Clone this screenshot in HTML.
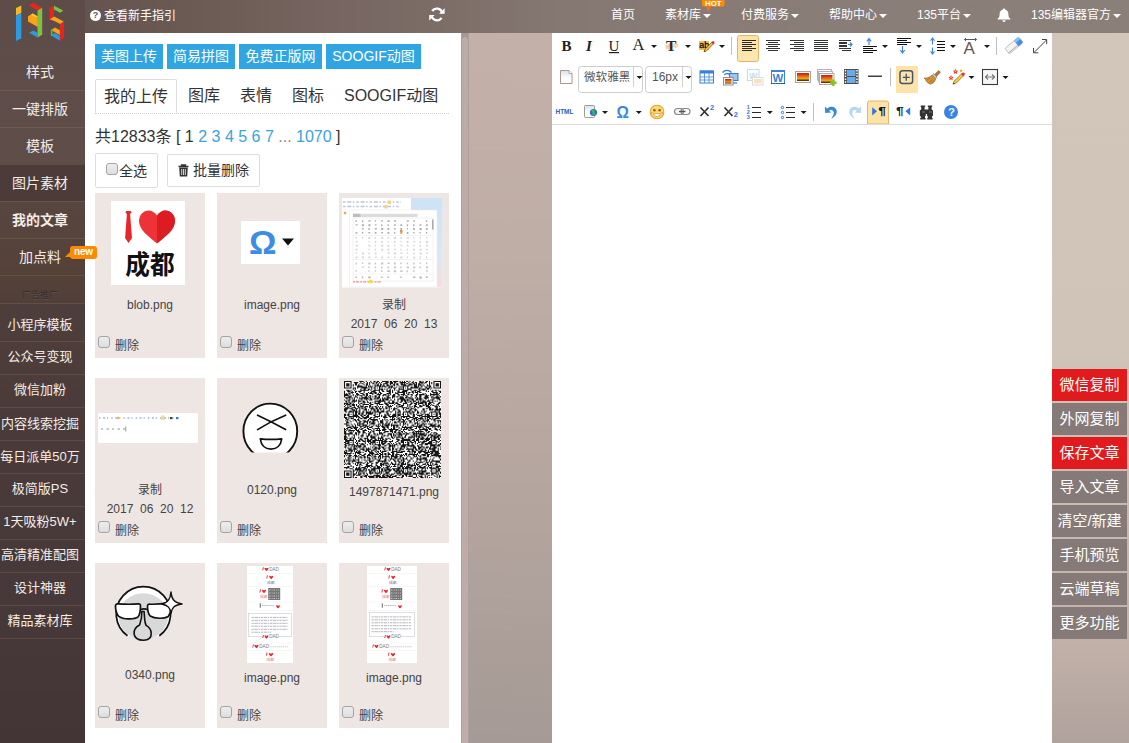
<!DOCTYPE html>
<html lang="zh-CN">
<head>
<meta charset="utf-8">
<title>135编辑器</title>
<style>
*{box-sizing:border-box;margin:0;padding:0}
html,body{width:1129px;height:743px;overflow:hidden}
body{position:relative;font-family:"Liberation Sans","Noto Sans CJK SC",sans-serif;font-size:12px;color:#333;background:#c0aea6}
.abs{position:absolute}
/* background strips */
#gap{left:461px;top:33px;width:91px;height:710px;background:linear-gradient(180deg,#c3b1a9 0%,#bfaea6 30%,#b5a59f 65%,#a59a95 100%)}
#sbar{left:461px;top:33px;width:8px;height:710px;background:linear-gradient(180deg,#bdaba5 0%,#c0aca6 100%);border-left:1px solid #ab9f9f;border-right:1px solid #ab9f9f}
#rstrip{left:1052px;top:33px;width:77px;height:710px;background:linear-gradient(180deg,#d2c6bb 0%,#d0c4b9 45%,#c2b2aa 85%,#b0a29c 100%)}
/* top bar */
#top{left:0;top:0;width:1129px;height:33px;background:linear-gradient(90deg,#655350 85px,#6c5a54 200px,#766560 330px,#7d6e68 450px,#857772 560px,#887b76 700px,#8a7e79 900px,#8b7f7a 1129px)}
#top .nav{position:absolute;top:0;height:30px;line-height:30px;color:#fff;font-size:12px;white-space:nowrap}
.caret{display:inline-block;width:0;height:0;border-left:4px solid transparent;border-right:4px solid transparent;border-top:4px solid #fff;vertical-align:middle;margin-left:2px}
/* sidebar */
#side{z-index:3;left:0;top:0;width:85px;height:743px;background:linear-gradient(180deg,#5e4c49 0px,#5f4d49 160px,#574640 202px,#544239 275px,#503f39 303px,#4e3e3b 304px,#4a3b3a 430px,#473839 600px,#433536 743px)}
#side .it{position:absolute;left:0;width:80px;text-align:center;color:#f3ece6;font-size:14px;white-space:nowrap}
#side .ln{position:absolute;left:0;width:85px;height:1px;background:rgba(165,135,90,.24)}
/* panel */
#panel{left:85px;top:33px;width:376px;height:710px;background:#fff}
.bbtn{position:absolute;height:25px;line-height:25px;background:#2fa6e2;color:#fff;font-size:14px;text-align:center;white-space:nowrap}
.tab{position:absolute;height:34px;line-height:33px;font-size:16px;color:#333;white-space:nowrap}
.card{position:absolute;width:110px;height:165px;background:#eee6e2}
.card .nm{position:absolute;left:0;width:110px;text-align:center;font-size:12px;color:#444;white-space:nowrap;line-height:14px}
.card .cb{position:absolute;left:3px;top:143px;width:12px;height:12px;border:1px solid #a4a4a4;border-radius:3px;background:linear-gradient(#ededed,#dedede)}
.card .dl{position:absolute;left:20px;top:146px;font-size:12px;color:#444;line-height:14px}
/* editor */
#editor{left:552px;top:33px;width:500px;height:710px;background:#fff}
#tbline{left:552px;top:124px;width:500px;height:1px;background:#dcdcdc}
.rb{position:absolute;left:1052px;width:75px;height:32px;line-height:32px;text-align:center;color:#fff;font-size:15px;background:#857a77;white-space:nowrap}
.rb.red{background:#e11b1d}
.ic{position:absolute;overflow:visible}
.dd{position:absolute;width:0;height:0;border-left:3px solid transparent;border-right:3px solid transparent;border-top:3px solid #222}
.sep{position:absolute;width:1px;height:18px;background:#b9c0d0}
.act{position:absolute;background:#fde0a2;border:1px solid #e2b774;border-radius:2px}
.combo{position:absolute;top:66px;height:26px;border:1px solid #cfcfcf;border-radius:3px;background:#fff;font-size:12px;color:#555;line-height:20px}
</style>
</head>
<body>
<div id="gap" class="abs"></div>
<div id="sbar" class="abs"><svg class="abs" style="left:0;top:0" width="6" height="6" viewBox="0 0 6 6"><path d="M0 0h6v6l-3-2.500-3 2.500z" fill="#a29998"/></svg></div>
<div id="rstrip" class="abs"></div>
<div id="top" class="abs">
  <div class="nav" style="left:90px;top:1px"><span style="display:inline-block;width:11px;height:11px;border-radius:6px;background:#fff;color:#64524e;font-size:9px;font-weight:bold;line-height:11px;text-align:center;vertical-align:middle;margin-right:3px;position:relative;top:-1px">?</span>查看新手指引</div>
  <svg class="abs" style="left:429px;top:7px" width="16" height="15" viewBox="0 0 16 15"><path d="M13.300 6.200A5.600 5.600 0 0 0 3.200 4" fill="none" stroke="#fff" stroke-width="2.300"/><path d="M15.600 1.300v5.500h-5.500z" fill="#fff"/><path d="M2.500 8.600a5.600 5.600 0 0 0 10.100 2.300" fill="none" stroke="#fff" stroke-width="2.300"/><path d="M.2 13.600v-5.500h5.500z" fill="#fff"/></svg>
  <svg class="abs" style="left:997px;top:8px" width="14" height="14" viewBox="0 0 14 14"><path d="M7 .6c.7 0 1.100.4 1.100 1 2.200.6 3.300 2.300 3.300 4.600 0 2.600.7 3.700 2 4.600v.7h-12.800v-.7c1.300-.9 2-2 2-4.600 0-2.300 1.100-4 3.300-4.600 0-.6.400-1 1.100-1z" fill="#fff"/><path d="M5.300 12.300h3.400a1.700 1.700 0 0 1-3.400 0z" fill="#fff"/></svg>
  <svg class="abs" style="left:702px;top:0" width="23" height="13" viewBox="0 0 23 13"><path d="M0 0h22.500v4.500a2 2 0 0 1-2 2h-18.500a2 2 0 0 1-2-2z" fill="#ff8a00"/><path d="M4.300 6.500h5.200l-4 5.500z" fill="#f4701c"/><text x="3" y="5.500" font-family="Liberation Sans, sans-serif" font-weight="bold" font-size="6.400" fill="#fff" textLength="16.500" lengthAdjust="spacingAndGlyphs">HOT</text></svg>
  <div class="nav" style="left:611px">首页</div>
  <div class="nav" style="left:665px">素材库<span class="caret"></span></div>
  <div class="nav" style="left:741px">付费服务<span class="caret"></span></div>
  <div class="nav" style="left:829px">帮助中心<span class="caret"></span></div>
  <div class="nav" style="left:917px">135平台<span class="caret"></span></div>
  <div class="nav" style="left:1031px">135编辑器官方<span class="caret"></span></div>
</div>
<div id="side" class="abs">
  <svg class="abs" style="left:0;top:0;z-index:6" width="85" height="46" viewBox="0 0 85 46">
    <path d="M16 8l5.300-2.500v7.500l-5.300 2.500z" fill="#f5b820"/><path d="M16 15.500l5.300-2.500v25.500l-5.300 2.500z" fill="#2c9be2"/>
    <path d="M28.500 5.300l4.700-2.500 9 5-4.700 2.700z" fill="#e3261f"/><path d="M37.500 10.500l4.700-2.700v27l-4.700 2.700z" fill="#7cc142"/>
    <path d="M28 16.200l4.800-2.600 5 2.800v10.500l-9.800-5.500z" fill="#f8a31a"/><path d="M32.800 13.600l5 2.800-2 1.200-5-2.800z" fill="#fbc82a"/>
    <path d="M29 32.800l4.300-2.300 4.500 2.500v4.500l-8.800-4.700z" fill="#2c9be2"/>
    <path d="M49.500 7.800l4.500-2v13l-4.500 2.400z" fill="#e3261f"/><path d="M54 5.800l9.300 4.800-3 2.200-6.300-3.400z" fill="#7cc142"/>
    <path d="M49.800 19.200l4.400-2.700 9.600 5-3.600 2.500-6-3z" fill="#f8a31a"/><path d="M59.800 24.500l4.200-3v16l-4.200 3.300z" fill="#e3261f"/>
    <path d="M51 30l4-2.600 4.800 2.900v4.700z" fill="#f8a31a"/><path d="M51 35.400l3.600-2.300 5.200 2.700v5z" fill="#2c9be2"/><path d="M50.800 30l1.800-1v6l-1.800 1z" fill="#5cb83a"/>
  </svg>
  <div class="abs" style="left:0;top:164px;width:85px;height:37px;background:#4b3c3a"></div>
  <div class="it" style="top:62px;line-height:20px">样式</div>
  <div class="it" style="top:99px;line-height:20px">一键排版</div>
  <div class="it" style="top:136px;line-height:20px">模板</div>
  <div class="it" style="top:173px;line-height:20px">图片素材</div>
  <div class="it" style="top:210px;line-height:20px;font-weight:bold">我的文章</div>
  <div class="it" style="top:247px;line-height:20px">加点料</div>
  <div class="ln" style="top:90px"></div>
  <div class="ln" style="top:127px"></div>
  <div class="ln" style="top:164px"></div>
  <div class="ln" style="top:201px"></div>
  <div class="ln" style="top:238px"></div>
  <div class="ln" style="top:275px"></div>
  <div class="it" style="top:286px;line-height:18px;font-size:9px;color:#382c2a;text-shadow:0 1px 0 rgba(255,255,255,.10)">广告推广</div>
  <div class="it" style="top:315px;line-height:20px;font-size:13px">小程序模板</div>
  <div class="it" style="top:347px;line-height:20px;font-size:13px">公众号变现</div>
  <div class="it" style="top:380px;line-height:20px;font-size:13px">微信加粉</div>
  <div class="it" style="top:414px;line-height:20px;font-size:13px">内容线索挖掘</div>
  <div class="it" style="top:447px;line-height:20px;font-size:13px">每日派单50万</div>
  <div class="it" style="top:479px;line-height:20px;font-size:13px">极简版PS</div>
  <div class="it" style="top:512px;line-height:20px;font-size:13px">1天吸粉5W+</div>
  <div class="it" style="top:545px;line-height:20px;font-size:13px">高清精准配图</div>
  <div class="it" style="top:578px;line-height:20px;font-size:13px">设计神器</div>
  <div class="it" style="top:611px;line-height:20px;font-size:13px">精品素材库</div>
  <div class="ln" style="top:303px"></div>
  <div class="ln" style="top:341px"></div>
  <div class="ln" style="top:374px"></div>
  <div class="ln" style="top:407px"></div>
  <div class="ln" style="top:440px"></div>
  <div class="ln" style="top:473px"></div>
  <div class="ln" style="top:506px"></div>
  <div class="ln" style="top:539px"></div>
  <div class="ln" style="top:572px"></div>
  <div class="ln" style="top:605px"></div>
  <div class="ln" style="top:638px"></div>
  <div class="abs" style="left:70px;top:246px;width:27px;height:13px;border-radius:3px;background:#ff8a00;color:#fff;font-size:10px;font-weight:bold;line-height:12.500px;text-align:center;letter-spacing:-.2px;z-index:5">new</div>
  <div class="abs" style="left:65px;top:251px;width:0;height:0;border-left:6px solid transparent;border-bottom:6px solid #ff8a00;z-index:5"></div>
</div>
<div id="panel" class="abs">
  <div class="bbtn" style="left:10px;top:11px;width:68px">美图上传</div>
  <div class="bbtn" style="left:82px;top:11px;width:68px">简易拼图</div>
  <div class="bbtn" style="left:154px;top:11px;width:83px">免费正版网</div>
  <div class="bbtn" style="left:241px;top:11px;width:95px">SOOGIF动图</div>
  <div class="abs" style="left:10px;top:80px;width:354px;height:0;border-top:1px dotted #cfcfcf"></div>
  <div class="tab" style="left:10px;top:46px;width:82px;text-align:center;border:1px solid #ddd;border-bottom:1px solid #fff;border-radius:2px 2px 0 0;background:#fff">我的上传</div>
  <div class="tab" style="left:103px;top:46px">图库</div>
  <div class="tab" style="left:155px;top:46px">表情</div>
  <div class="tab" style="left:207px;top:46px">图标</div>
  <div class="tab" style="left:259px;top:46px">SOOGIF动图</div>
  <div class="abs" style="left:10px;top:93px;height:22px;line-height:22px;font-size:16px;color:#333;white-space:nowrap;word-spacing:0">共12833条 [ 1 <span style="color:#3aa3dc">2 3 4 5 6 7</span> <span style="color:#888">...</span> <span style="color:#3aa3dc">1070</span> ]</div>
  <div class="abs" style="left:10px;top:120px;width:63px;height:35px;border:1px solid #ddd;border-radius:2px;font-size:14px;line-height:32px;color:#333;white-space:nowrap"><span style="position:absolute;left:10px;top:9px;width:12px;height:12px;border:1px solid #a4a4a4;border-radius:3px;background:linear-gradient(#ededed,#dedede)"></span><span style="position:absolute;left:23px;top:1px">全选</span></div>
  <div class="abs" style="left:82px;top:121px;width:93px;height:33px;border:1px solid #ddd;border-radius:2px;font-size:14px;line-height:32px;color:#333;white-space:nowrap"><svg style="position:absolute;left:10px;top:9px" width="11" height="13" viewBox="0 0 11 13"><path d="M0.5 2.500h10M3.500 2.500v-1.500h4v1.500" fill="none" stroke="#333" stroke-width="1.400"/><path d="M1.200 3.500h8.600l-.6 9h-7.400z" fill="#333"/><path d="M3.700 5v6M5.500 5v6M7.300 5v6" stroke="#fff" stroke-width=".8"/></svg><span style="position:absolute;left:25px;top:-1px">批量删除</span></div>
  <div class="card" id="c00" style="left:10px;top:160px"><svg class="abs" style="left:0;top:0" width="110" height="100" viewBox="95 193 110 100"><rect x="111" y="201" width="74" height="84" fill="#fff"/><path d="M126.300 211h4.400l.8 1.500-1.400 1.500 1.900 24-3.500 5-3.400-5 1.800-24-1.400-1.500z" fill="#e8262a"/><path d="M157 243.500c-9-7.500-18-14-18-22.500 0-6 4.500-10.500 9.500-10.500 3.500 0 6.500 2 8.500 5 2-3 5-5 8.500-5 5 0 9.500 4.500 9.500 10.500 0 8.500-9 15-18 22.500z" fill="#ee3338"/><path d="M157 243.500v-28c2-3 5-5 8.500-5 5 0 9.500 4.500 9.500 10.500 0 8.500-9 15-18 22.500z" fill="#dc1c22"/><text x="125.300" y="274" font-family="Liberation Sans, Noto Sans CJK SC, sans-serif" font-weight="bold" font-size="24.700" fill="#111" transform="translate(0 274) scale(1 1.040) translate(0 -274)">成都</text></svg><div class="nm" style="top:105px">blob.png</div><span class="cb"></span><span class="dl">删除</span></div>
  <div class="card" id="c01" style="left:132px;top:160px"><svg class="abs" style="left:0;top:0" width="110" height="100" viewBox="217 193 110 100"><rect x="241" y="221" width="59" height="43" fill="#fff"/><text x="249" y="253.500" font-family="Liberation Sans, sans-serif" font-weight="bold" font-size="34" fill="#3d8de4" textLength="27.500" lengthAdjust="spacingAndGlyphs">Ω</text><path d="M282 238.600h12l-6 7z" fill="#111"/></svg><div class="nm" style="top:105px">image.png</div><span class="cb"></span><span class="dl">删除</span></div>
  <div class="card" id="c02" style="left:254px;top:160px"><svg class="abs" style="left:0;top:0" width="110" height="100" viewBox="339 193 110 100"><defs><linearGradient id="gbp" x1="0" y1="0" x2="0" y2="1"><stop offset="0" stop-color="#cfe3f6"/><stop offset=".55" stop-color="#d9e6f4"/><stop offset="1" stop-color="#f6dce0"/></linearGradient></defs><rect x="342" y="198" width="100.400" height="89.500" fill="#fff"/><rect x="411" y="198" width="31.400" height="12" fill="#cfe3f6"/><rect x="437" y="209" width="5.400" height="78.500" fill="url(#gbp)"/><rect x="349.500" y="210" width="87.500" height="77" fill="#fff" stroke="#ececec" stroke-width=".6"/><path d="M343 202h58M343 206.500h56" stroke="#b9c6d8" stroke-width="1.400" stroke-dasharray="2.500 1.800 4 1.500 1.500 2"/><rect x="388" y="200.500" width="3" height="3.500" fill="#f3d489"/><rect x="384.500" y="205" width="3" height="3.500" fill="#f3d489"/><rect x="343.800" y="211.800" width="2.400" height="2.400" fill="#e8a848"/><rect x="353" y="213.800" width="64.500" height="3.200" fill="#dcdcdc"/><rect x="353" y="213.800" width="7.500" height="3.200" fill="#bdbdbd"/><rect x="353" y="218" width="80" height="63" fill="none" stroke="#e6e6e6" stroke-width=".6"/><rect x="432" y="219.500" width="1.600" height="10" fill="#a9a9b6"/><path d="M355.5 220.3h1.4v1.8h-1.4zM361.9 220.3h1.4v2.0h-1.4zM368.3 220.3h2.2v1.4h-2.2zM374.7 220.3h1.4v1.4h-1.4zM381.1 220.3h1.8v1.4h-1.8zM387.5 220.3h2.2v1.8h-2.2zM393.9 220.3h2.2v1.4h-2.2zM406.7 220.3h2.2v1.4h-2.2zM413.1 220.3h1.8v1.4h-1.8zM425.9 220.3h1.4v1.8h-1.4zM355.5 224.2h2.2v1.4h-2.2zM361.9 224.2h2.2v2.0h-2.2zM368.3 224.2h2.2v2.0h-2.2zM374.7 224.2h1.8v1.4h-1.8zM381.1 224.2h1.4v2.0h-1.4zM387.5 224.2h1.4v1.8h-1.4zM393.9 224.2h1.8v1.8h-1.8zM400.3 224.2h1.8v1.8h-1.8zM406.7 224.2h1.4v2.0h-1.4zM413.1 224.2h1.4v2.0h-1.4zM419.5 224.2h1.8v1.8h-1.8zM425.9 224.2h1.8v2.0h-1.8zM361.9 228.1h1.8v1.4h-1.8zM368.3 228.1h1.4v1.8h-1.4zM374.7 228.1h2.2v1.4h-2.2zM381.1 228.1h2.2v1.8h-2.2zM387.5 228.1h1.8v2.0h-1.8zM393.9 228.1h1.8v1.4h-1.8zM400.3 228.1h1.8v1.8h-1.8zM406.7 228.1h1.4v1.4h-1.4zM413.1 228.1h1.8v2.0h-1.8zM419.5 228.1h2.2v1.8h-2.2zM425.9 228.1h1.8v2.0h-1.8zM355.5 232.0h1.8v1.8h-1.8zM361.9 232.0h1.4v1.8h-1.4zM368.3 232.0h1.8v1.4h-1.8zM374.7 232.0h1.8v1.8h-1.8zM381.1 232.0h1.8v1.4h-1.8zM387.5 232.0h1.8v2.0h-1.8zM393.9 232.0h1.4v1.8h-1.4zM400.3 232.0h1.8v2.0h-1.8zM406.7 232.0h1.8v2.0h-1.8zM413.1 232.0h1.4v1.4h-1.4zM419.5 232.0h1.4v1.4h-1.4zM425.9 232.0h1.4v1.8h-1.4z" fill="#6f7380" opacity="0.55"/><path d="M355.5 237.0h1.4v1.8h-1.4zM361.9 237.0h1.4v1.8h-1.4zM368.3 237.0h2.2v2.0h-2.2zM374.7 237.0h1.4v2.0h-1.4zM381.1 237.0h2.2v2.0h-2.2zM387.5 237.0h1.4v1.8h-1.4zM393.9 237.0h2.2v2.0h-2.2zM400.3 237.0h1.8v1.8h-1.8zM406.7 237.0h2.2v1.8h-2.2zM413.1 237.0h1.4v1.4h-1.4zM419.5 237.0h1.4v1.8h-1.4zM425.9 237.0h1.4v1.4h-1.4zM355.5 240.9h2.2v1.4h-2.2zM368.3 240.9h1.4v1.4h-1.4zM374.7 240.9h1.4v2.0h-1.4zM381.1 240.9h1.8v2.0h-1.8zM387.5 240.9h1.4v1.4h-1.4zM393.9 240.9h1.8v1.8h-1.8zM400.3 240.9h1.4v1.4h-1.4zM406.7 240.9h1.8v2.0h-1.8zM413.1 240.9h2.2v1.4h-2.2zM419.5 240.9h1.4v2.0h-1.4zM425.9 240.9h2.2v2.0h-2.2zM355.5 244.8h2.2v1.8h-2.2zM368.3 244.8h2.2v1.8h-2.2zM374.7 244.8h1.4v1.8h-1.4zM381.1 244.8h2.2v2.0h-2.2zM387.5 244.8h1.8v2.0h-1.8zM393.9 244.8h1.4v1.4h-1.4zM400.3 244.8h2.2v1.4h-2.2zM406.7 244.8h1.8v1.8h-1.8zM413.1 244.8h1.4v1.8h-1.4zM419.5 244.8h1.4v2.0h-1.4zM425.9 244.8h1.8v1.8h-1.8zM355.5 248.7h2.2v1.8h-2.2zM368.3 248.7h1.4v1.4h-1.4zM374.7 248.7h1.4v1.8h-1.4zM381.1 248.7h2.2v2.0h-2.2zM387.5 248.7h1.8v2.0h-1.8zM393.9 248.7h2.2v1.4h-2.2zM400.3 248.7h1.4v1.8h-1.4zM406.7 248.7h1.4v1.8h-1.4zM413.1 248.7h1.8v2.0h-1.8zM419.5 248.7h2.2v1.8h-2.2zM425.9 248.7h2.2v1.4h-2.2zM355.5 252.6h1.4v1.4h-1.4zM361.9 252.6h2.2v1.8h-2.2zM368.3 252.6h1.4v2.0h-1.4zM374.7 252.6h1.8v2.0h-1.8zM387.5 252.6h2.2v1.4h-2.2zM393.9 252.6h2.2v2.0h-2.2zM400.3 252.6h2.2v1.4h-2.2zM406.7 252.6h1.4v1.4h-1.4zM413.1 252.6h1.4v1.8h-1.4zM419.5 252.6h2.2v1.8h-2.2zM425.9 252.6h1.8v1.4h-1.8zM355.5 256.5h2.2v1.8h-2.2zM361.9 256.5h2.2v2.0h-2.2zM368.3 256.5h2.2v1.8h-2.2zM374.7 256.5h2.2v1.4h-2.2zM381.1 256.5h2.2v2.0h-2.2zM387.5 256.5h1.8v1.4h-1.8zM393.9 256.5h1.4v1.4h-1.4zM400.3 256.5h2.2v2.0h-2.2zM406.7 256.5h1.4v1.8h-1.4zM413.1 256.5h2.2v2.0h-2.2zM419.5 256.5h1.4v2.0h-1.4zM425.9 256.5h1.4v1.8h-1.4z" fill="#8a8e98" opacity="0.35"/><path d="M355.5 262.5h1.4v2.0h-1.4zM361.9 262.5h1.4v1.4h-1.4zM368.3 262.5h2.2v2.0h-2.2zM374.7 262.5h1.4v2.0h-1.4zM381.1 262.5h2.2v2.0h-2.2zM387.5 262.5h2.2v1.4h-2.2zM393.9 262.5h1.8v2.0h-1.8zM400.3 262.5h1.4v1.8h-1.4zM406.7 262.5h1.4v1.8h-1.4zM413.1 262.5h1.4v2.0h-1.4zM419.5 262.5h1.4v1.4h-1.4zM425.9 262.5h1.4v1.4h-1.4zM361.9 266.4h1.8v1.4h-1.8zM368.3 266.4h1.4v1.8h-1.4zM374.7 266.4h1.4v1.8h-1.4zM381.1 266.4h1.4v2.0h-1.4zM387.5 266.4h1.4v2.0h-1.4zM393.9 266.4h2.2v1.8h-2.2zM400.3 266.4h1.4v1.8h-1.4zM406.7 266.4h2.2v1.8h-2.2zM413.1 266.4h2.2v1.8h-2.2zM419.5 266.4h1.4v1.8h-1.4zM425.9 266.4h2.2v1.8h-2.2zM355.5 270.3h1.4v1.4h-1.4zM368.3 270.3h1.4v1.4h-1.4zM374.7 270.3h1.4v1.4h-1.4zM381.1 270.3h1.4v1.8h-1.4zM387.5 270.3h2.2v1.8h-2.2zM393.9 270.3h2.2v2.0h-2.2zM400.3 270.3h2.2v1.8h-2.2zM406.7 270.3h1.4v2.0h-1.4zM413.1 270.3h1.4v1.8h-1.4zM425.9 270.3h1.8v1.4h-1.8z" fill="#7a7e88" opacity="0.45"/><path d="M355.5 276.5h1.4v1.4h-1.4zM361.9 276.5h1.4v1.8h-1.4zM368.3 276.5h2.2v1.8h-2.2zM381.1 276.5h1.4v1.4h-1.4zM387.5 276.5h1.4v1.4h-1.4zM400.3 276.5h1.4v1.4h-1.4zM413.1 276.5h2.2v1.4h-2.2zM419.5 276.5h2.2v2.0h-2.2zM425.9 276.5h1.8v1.4h-1.8z" fill="#666" opacity="0.5"/><path d="M353 235.500h80M353 259.500h80M353 274h80" stroke="#ececec" stroke-width=".6"/><path d="M353 281.800h29" stroke="#ee8a90" stroke-width="1.300" stroke-dasharray="2 1 3 1.200"/><circle cx="370.500" cy="281.500" r="2" fill="#f6e21a"/><rect x="400" y="230" width="2.600" height="2.400" fill="#e89a30"/></svg><div class="nm" style="top:105px">录制</div><div class="nm" style="top:124px">2017&nbsp; 06&nbsp; 20&nbsp; 13</div><span class="cb"></span><span class="dl">删除</span></div>
  <div class="card" id="c10" style="left:10px;top:345px"><svg class="abs" style="left:0;top:0" width="110" height="100" viewBox="95 378 110 100"><rect x="98" y="413" width="100" height="30" fill="#fff"/><path d="M99 418h80" stroke="#9fb6d6" stroke-width="1.600" stroke-dasharray="1.500 2.500 2 2 1.200 3"/><rect x="161" y="415.500" width="3.400" height="4.500" fill="#f6d98a"/><circle cx="118" cy="418" r="1.300" fill="#f0b838"/><rect x="170" y="417" width="2.400" height="2.200" fill="#444"/><rect x="176" y="417" width="2.400" height="2.200" fill="#3a78d8"/><path d="M101 429h24" stroke="#8e939c" stroke-width="1.200" stroke-dasharray="2 3.500 2.500 3"/><path d="M125.800 426.500v5" stroke="#666" stroke-width=".7"/></svg><div class="nm" style="top:105px">录制</div><div class="nm" style="top:124px">2017&nbsp; 06&nbsp; 20&nbsp; 12</div><span class="cb"></span><span class="dl">删除</span></div>
  <div class="card" id="c11" style="left:132px;top:345px"><svg class="abs" style="left:0;top:0" width="110" height="100" viewBox="217 378 110 100"><defs><clipPath id="cf"><rect x="217" y="378" width="110" height="74.600"/></clipPath></defs><g clip-path="url(#cf)"><ellipse cx="270.300" cy="431.300" rx="26.900" ry="27.700" fill="#fff" stroke="#111" stroke-width="1.900"/></g><path d="M257.600 415.200q13 6 28 14.400M285.600 415.200q-15 6-28 14.400" stroke="#111" stroke-width="1.700" fill="none" stroke-linecap="round"/><path d="M260.300 438.800q10.700 1.200 21.400 0c-.8 6.500-5 10.300-10.700 10.300s-9.900-3.800-10.700-10.300z" fill="#fff" stroke="#111" stroke-width="1.700" stroke-linejoin="round"/></svg><div class="nm" style="top:105px">0120.png</div><span class="cb"></span><span class="dl">删除</span></div>
  <div class="card" id="c12" style="left:254px;top:345px"><svg class="abs" style="left:0;top:0" width="110" height="104" viewBox="339 378 110 104"><rect x="344" y="381" width="97" height="97" fill="#fff"/><path d="M344.0 381.0h7.6M359.3 381.0h4.4M365.8 381.0h1.1M370.2 381.0h1.1M373.4 381.0h2.2M376.7 381.0h2.2M382.1 381.0h6.5M389.8 381.0h2.2M393.0 381.0h5.4M399.6 381.0h1.1M401.8 381.0h1.1M403.9 381.0h1.1M406.1 381.0h2.2M409.4 381.0h1.1M412.7 381.0h1.1M419.2 381.0h2.2M422.5 381.0h1.1M425.7 381.0h2.2M429.0 381.0h1.1M433.4 381.0h7.6M344.0 382.1h1.1M350.5 382.1h1.1M353.8 382.1h4.4M360.3 382.1h1.1M363.6 382.1h1.1M366.9 382.1h1.1M369.1 382.1h1.1M371.2 382.1h1.1M373.4 382.1h1.1M375.6 382.1h2.2M378.9 382.1h1.1M381.1 382.1h1.1M385.4 382.1h3.3M389.8 382.1h3.3M394.1 382.1h2.2M399.6 382.1h6.5M408.3 382.1h1.1M411.6 382.1h2.2M414.8 382.1h2.2M419.2 382.1h4.4M424.7 382.1h2.2M429.0 382.1h1.1M431.2 382.1h1.1M433.4 382.1h1.1M439.9 382.1h1.1M344.0 383.2h1.1M346.2 383.2h3.3M350.5 383.2h1.1M354.9 383.2h2.2M359.3 383.2h1.1M361.4 383.2h2.2M365.8 383.2h2.2M369.1 383.2h1.1M372.3 383.2h2.2M375.6 383.2h1.1M377.8 383.2h1.1M380.0 383.2h1.1M383.2 383.2h4.4M389.8 383.2h3.3M394.1 383.2h1.1M396.3 383.2h2.2M400.7 383.2h2.2M403.9 383.2h1.1M406.1 383.2h2.2M409.4 383.2h2.2M412.7 383.2h2.2M415.9 383.2h1.1M418.1 383.2h2.2M421.4 383.2h1.1M423.6 383.2h1.1M429.0 383.2h1.1M431.2 383.2h1.1M433.4 383.2h1.1M435.6 383.2h3.3M439.9 383.2h1.1M344.0 384.3h1.1M346.2 384.3h3.3M350.5 384.3h1.1M352.7 384.3h1.1M354.9 384.3h2.2M358.2 384.3h1.1M363.6 384.3h1.1M365.8 384.3h2.2M369.1 384.3h1.1M374.5 384.3h1.1M376.7 384.3h2.2M380.0 384.3h2.2M383.2 384.3h1.1M386.5 384.3h2.2M389.8 384.3h1.1M393.0 384.3h2.2M396.3 384.3h2.2M400.7 384.3h5.4M408.3 384.3h4.4M413.8 384.3h3.3M418.1 384.3h3.3M422.5 384.3h1.1M426.8 384.3h1.1M429.0 384.3h1.1M433.4 384.3h1.1M435.6 384.3h3.3M439.9 384.3h1.1M344.0 385.4h1.1M346.2 385.4h3.3M350.5 385.4h1.1M352.7 385.4h1.1M357.1 385.4h5.4M365.8 385.4h1.1M368.0 385.4h1.1M370.2 385.4h1.1M372.3 385.4h1.1M374.5 385.4h6.5M382.1 385.4h3.3M386.5 385.4h3.3M390.9 385.4h2.2M394.1 385.4h1.1M398.5 385.4h1.1M402.9 385.4h6.5M413.8 385.4h3.3M418.1 385.4h1.1M420.3 385.4h2.2M423.6 385.4h1.1M426.8 385.4h4.4M433.4 385.4h1.1M435.6 385.4h3.3M439.9 385.4h1.1M344.0 386.4h1.1M350.5 386.4h1.1M357.1 386.4h9.8M368.0 386.4h4.4M374.5 386.4h1.1M378.9 386.4h4.4M384.3 386.4h2.2M388.7 386.4h4.4M396.3 386.4h1.1M399.6 386.4h4.4M407.2 386.4h1.1M410.5 386.4h2.2M413.8 386.4h5.4M421.4 386.4h1.1M424.7 386.4h2.2M429.0 386.4h2.2M433.4 386.4h1.1M439.9 386.4h1.1M344.0 387.5h7.6M352.7 387.5h3.3M357.1 387.5h1.1M361.4 387.5h6.5M371.2 387.5h1.1M373.4 387.5h2.2M376.7 387.5h1.1M378.9 387.5h1.1M387.6 387.5h2.2M390.9 387.5h1.1M393.0 387.5h3.3M398.5 387.5h1.1M402.9 387.5h1.1M405.0 387.5h1.1M407.2 387.5h1.1M410.5 387.5h7.6M419.2 387.5h2.2M425.7 387.5h4.4M431.2 387.5h1.1M433.4 387.5h7.6M352.7 388.6h1.1M354.9 388.6h1.1M360.3 388.6h1.1M363.6 388.6h2.2M368.0 388.6h2.2M371.2 388.6h1.1M374.5 388.6h1.1M378.9 388.6h4.4M384.3 388.6h1.1M386.5 388.6h1.1M389.8 388.6h1.1M394.1 388.6h1.1M398.5 388.6h5.4M407.2 388.6h4.4M418.1 388.6h2.2M421.4 388.6h4.4M426.8 388.6h2.2M430.1 388.6h1.1M346.2 389.7h3.3M350.5 389.7h1.1M353.8 389.7h1.1M360.3 389.7h8.7M370.2 389.7h1.1M373.4 389.7h6.5M381.1 389.7h2.2M386.5 389.7h1.1M388.7 389.7h2.2M392.0 389.7h1.1M394.1 389.7h1.1M396.3 389.7h1.1M398.5 389.7h1.1M402.9 389.7h5.4M410.5 389.7h1.1M413.8 389.7h3.3M419.2 389.7h2.2M422.5 389.7h2.2M425.7 389.7h1.1M432.3 389.7h1.1M434.5 389.7h2.2M437.7 389.7h1.1M344.0 390.8h1.1M347.3 390.8h3.3M351.6 390.8h1.1M354.9 390.8h2.2M358.2 390.8h3.3M363.6 390.8h1.1M371.2 390.8h4.4M378.9 390.8h1.1M382.1 390.8h2.2M386.5 390.8h4.4M392.0 390.8h1.1M397.4 390.8h2.2M401.8 390.8h5.4M411.6 390.8h2.2M414.8 390.8h1.1M417.0 390.8h3.3M425.7 390.8h1.1M427.9 390.8h1.1M431.2 390.8h2.2M435.6 390.8h1.1M438.8 390.8h2.2M344.0 391.9h1.1M348.4 391.9h1.1M350.5 391.9h3.3M354.9 391.9h1.1M359.3 391.9h1.1M363.6 391.9h1.1M368.0 391.9h1.1M370.2 391.9h2.2M373.4 391.9h3.3M378.9 391.9h2.2M388.7 391.9h2.2M392.0 391.9h1.1M395.2 391.9h1.1M397.4 391.9h7.6M406.1 391.9h1.1M408.3 391.9h2.2M411.6 391.9h2.2M414.8 391.9h3.3M419.2 391.9h2.2M432.3 391.9h5.4M439.9 391.9h1.1M344.0 393.0h1.1M346.2 393.0h1.1M348.4 393.0h2.2M351.6 393.0h1.1M356.0 393.0h2.2M360.3 393.0h3.3M365.8 393.0h2.2M369.1 393.0h4.4M374.5 393.0h2.2M377.8 393.0h1.1M380.0 393.0h2.2M386.5 393.0h4.4M395.2 393.0h3.3M402.9 393.0h2.2M406.1 393.0h1.1M408.3 393.0h1.1M412.7 393.0h1.1M417.0 393.0h1.1M422.5 393.0h1.1M424.7 393.0h1.1M430.1 393.0h1.1M433.4 393.0h1.1M435.6 393.0h2.2M438.8 393.0h1.1M344.0 394.1h4.4M349.4 394.1h1.1M352.7 394.1h1.1M356.0 394.1h3.3M362.5 394.1h2.2M365.8 394.1h2.2M372.3 394.1h1.1M376.7 394.1h4.4M383.2 394.1h3.3M387.6 394.1h1.1M389.8 394.1h1.1M393.0 394.1h2.2M397.4 394.1h2.2M400.7 394.1h4.4M407.2 394.1h2.2M410.5 394.1h2.2M415.9 394.1h2.2M419.2 394.1h5.4M425.7 394.1h1.1M430.1 394.1h8.7M344.0 395.2h5.4M350.5 395.2h1.1M352.7 395.2h1.1M354.9 395.2h1.1M357.1 395.2h1.1M359.3 395.2h3.3M363.6 395.2h1.1M365.8 395.2h2.2M369.1 395.2h2.2M374.5 395.2h2.2M378.9 395.2h1.1M382.1 395.2h2.2M385.4 395.2h1.1M387.6 395.2h2.2M392.0 395.2h3.3M398.5 395.2h1.1M402.9 395.2h1.1M405.0 395.2h2.2M411.6 395.2h1.1M414.8 395.2h2.2M419.2 395.2h2.2M424.7 395.2h4.4M430.1 395.2h1.1M433.4 395.2h1.1M436.6 395.2h1.1M438.8 395.2h1.1M344.0 396.3h1.1M348.4 396.3h3.3M354.9 396.3h2.2M361.4 396.3h1.1M364.7 396.3h2.2M368.0 396.3h1.1M370.2 396.3h1.1M372.3 396.3h1.1M374.5 396.3h2.2M377.8 396.3h2.2M386.5 396.3h2.2M392.0 396.3h3.3M396.3 396.3h2.2M399.6 396.3h3.3M406.1 396.3h2.2M410.5 396.3h1.1M415.9 396.3h1.1M419.2 396.3h2.2M424.7 396.3h3.3M431.2 396.3h2.2M435.6 396.3h3.3M439.9 396.3h1.1M345.1 397.3h5.4M351.6 397.3h1.1M353.8 397.3h1.1M357.1 397.3h1.1M359.3 397.3h1.1M361.4 397.3h6.5M369.1 397.3h2.2M374.5 397.3h1.1M376.7 397.3h3.3M382.1 397.3h1.1M384.3 397.3h1.1M386.5 397.3h4.4M392.0 397.3h1.1M399.6 397.3h4.4M405.0 397.3h2.2M408.3 397.3h2.2M411.6 397.3h1.1M414.8 397.3h1.1M417.0 397.3h1.1M419.2 397.3h2.2M423.6 397.3h5.4M431.2 397.3h1.1M433.4 397.3h6.5M346.2 398.4h1.1M349.4 398.4h1.1M351.6 398.4h1.1M353.8 398.4h1.1M359.3 398.4h3.3M363.6 398.4h5.4M370.2 398.4h2.2M373.4 398.4h5.4M380.0 398.4h1.1M382.1 398.4h6.5M394.1 398.4h1.1M397.4 398.4h7.6M407.2 398.4h1.1M409.4 398.4h4.4M415.9 398.4h6.5M424.7 398.4h2.2M432.3 398.4h2.2M436.6 398.4h3.3M344.0 399.5h1.1M347.3 399.5h3.3M352.7 399.5h2.2M356.0 399.5h1.1M358.2 399.5h1.1M361.4 399.5h1.1M365.8 399.5h1.1M369.1 399.5h3.3M378.9 399.5h2.2M382.1 399.5h2.2M385.4 399.5h3.3M389.8 399.5h2.2M394.1 399.5h1.1M397.4 399.5h1.1M400.7 399.5h8.7M411.6 399.5h2.2M415.9 399.5h2.2M419.2 399.5h2.2M422.5 399.5h1.1M427.9 399.5h1.1M430.1 399.5h3.3M438.8 399.5h2.2M345.1 400.6h2.2M348.4 400.6h1.1M351.6 400.6h5.4M358.2 400.6h3.3M362.5 400.6h2.2M366.9 400.6h1.1M374.5 400.6h10.9M388.7 400.6h1.1M392.0 400.6h2.2M397.4 400.6h1.1M400.7 400.6h2.2M403.9 400.6h2.2M407.2 400.6h1.1M409.4 400.6h2.2M412.7 400.6h3.3M418.1 400.6h1.1M420.3 400.6h1.1M422.5 400.6h3.3M426.8 400.6h3.3M432.3 400.6h1.1M434.5 400.6h1.1M436.6 400.6h1.1M346.2 401.7h1.1M348.4 401.7h2.2M351.6 401.7h1.1M353.8 401.7h1.1M358.2 401.7h1.1M362.5 401.7h3.3M366.9 401.7h2.2M370.2 401.7h1.1M372.3 401.7h1.1M374.5 401.7h1.1M377.8 401.7h3.3M384.3 401.7h1.1M387.6 401.7h2.2M392.0 401.7h3.3M396.3 401.7h1.1M399.6 401.7h2.2M405.0 401.7h2.2M408.3 401.7h1.1M410.5 401.7h1.1M412.7 401.7h1.1M415.9 401.7h3.3M420.3 401.7h6.5M429.0 401.7h4.4M438.8 401.7h2.2M344.0 402.8h4.4M349.4 402.8h2.2M352.7 402.8h1.1M358.2 402.8h1.1M360.3 402.8h2.2M363.6 402.8h1.1M369.1 402.8h2.2M374.5 402.8h5.4M384.3 402.8h3.3M388.7 402.8h5.4M395.2 402.8h3.3M402.9 402.8h4.4M410.5 402.8h2.2M413.8 402.8h3.3M418.1 402.8h5.4M424.7 402.8h2.2M427.9 402.8h3.3M433.4 402.8h1.1M437.7 402.8h2.2M344.0 403.9h1.1M346.2 403.9h4.4M351.6 403.9h3.3M356.0 403.9h1.1M359.3 403.9h1.1M362.5 403.9h6.5M370.2 403.9h3.3M376.7 403.9h1.1M378.9 403.9h4.4M385.4 403.9h3.3M394.1 403.9h1.1M397.4 403.9h3.3M402.9 403.9h1.1M407.2 403.9h1.1M409.4 403.9h2.2M414.8 403.9h2.2M418.1 403.9h1.1M422.5 403.9h1.1M424.7 403.9h2.2M427.9 403.9h2.2M431.2 403.9h1.1M436.6 403.9h2.2M345.1 405.0h1.1M347.3 405.0h1.1M349.4 405.0h1.1M351.6 405.0h3.3M356.0 405.0h1.1M358.2 405.0h1.1M360.3 405.0h1.1M362.5 405.0h1.1M369.1 405.0h2.2M376.7 405.0h1.1M386.5 405.0h2.2M389.8 405.0h1.1M392.0 405.0h1.1M396.3 405.0h1.1M398.5 405.0h1.1M400.7 405.0h3.3M407.2 405.0h1.1M409.4 405.0h1.1M413.8 405.0h2.2M419.2 405.0h2.2M422.5 405.0h2.2M425.7 405.0h3.3M430.1 405.0h1.1M432.3 405.0h2.2M435.6 405.0h1.1M437.7 405.0h1.1M344.0 406.1h1.1M347.3 406.1h1.1M349.4 406.1h2.2M353.8 406.1h1.1M357.1 406.1h2.2M360.3 406.1h3.3M364.7 406.1h3.3M369.1 406.1h2.2M372.3 406.1h1.1M374.5 406.1h2.2M377.8 406.1h1.1M380.0 406.1h1.1M382.1 406.1h1.1M385.4 406.1h1.1M387.6 406.1h4.4M396.3 406.1h1.1M398.5 406.1h4.4M407.2 406.1h1.1M409.4 406.1h1.1M411.6 406.1h1.1M413.8 406.1h3.3M419.2 406.1h3.3M425.7 406.1h4.4M434.5 406.1h3.3M438.8 406.1h1.1M345.1 407.2h4.4M351.6 407.2h4.4M358.2 407.2h2.2M361.4 407.2h1.1M363.6 407.2h2.2M369.1 407.2h1.1M371.2 407.2h2.2M375.6 407.2h2.2M378.9 407.2h1.1M382.1 407.2h1.1M385.4 407.2h2.2M388.7 407.2h1.1M394.1 407.2h1.1M397.4 407.2h1.1M401.8 407.2h5.4M408.3 407.2h1.1M410.5 407.2h1.1M413.8 407.2h1.1M417.0 407.2h2.2M427.9 407.2h3.3M435.6 407.2h2.2M344.0 408.2h4.4M349.4 408.2h3.3M354.9 408.2h3.3M359.3 408.2h1.1M361.4 408.2h2.2M364.7 408.2h2.2M370.2 408.2h4.4M375.6 408.2h2.2M378.9 408.2h3.3M383.2 408.2h1.1M385.4 408.2h2.2M388.7 408.2h1.1M390.9 408.2h1.1M393.0 408.2h4.4M402.9 408.2h1.1M406.1 408.2h3.3M410.5 408.2h3.3M414.8 408.2h1.1M422.5 408.2h2.2M425.7 408.2h2.2M429.0 408.2h2.2M432.3 408.2h1.1M435.6 408.2h2.2M438.8 408.2h2.2M344.0 409.3h3.3M351.6 409.3h3.3M356.0 409.3h1.1M359.3 409.3h1.1M363.6 409.3h3.3M368.0 409.3h1.1M371.2 409.3h1.1M373.4 409.3h2.2M376.7 409.3h2.2M380.0 409.3h1.1M383.2 409.3h1.1M388.7 409.3h1.1M393.0 409.3h2.2M397.4 409.3h2.2M402.9 409.3h1.1M405.0 409.3h1.1M409.4 409.3h2.2M413.8 409.3h3.3M422.5 409.3h2.2M429.0 409.3h4.4M434.5 409.3h6.5M344.0 410.4h2.2M349.4 410.4h2.2M352.7 410.4h4.4M358.2 410.4h2.2M362.5 410.4h1.1M365.8 410.4h1.1M370.2 410.4h1.1M373.4 410.4h2.2M376.7 410.4h2.2M381.1 410.4h3.3M386.5 410.4h3.3M392.0 410.4h1.1M395.2 410.4h1.1M398.5 410.4h2.2M406.1 410.4h1.1M408.3 410.4h2.2M411.6 410.4h1.1M414.8 410.4h1.1M417.0 410.4h1.1M421.4 410.4h1.1M423.6 410.4h1.1M425.7 410.4h1.1M434.5 410.4h1.1M436.6 410.4h1.1M438.8 410.4h1.1M345.1 411.5h2.2M348.4 411.5h5.4M354.9 411.5h3.3M359.3 411.5h1.1M362.5 411.5h2.2M365.8 411.5h5.4M372.3 411.5h1.1M374.5 411.5h9.8M385.4 411.5h2.2M389.8 411.5h2.2M395.2 411.5h1.1M397.4 411.5h3.3M402.9 411.5h7.6M411.6 411.5h3.3M417.0 411.5h2.2M421.4 411.5h1.1M423.6 411.5h2.2M430.1 411.5h6.5M437.7 411.5h2.2M348.4 412.6h1.1M352.7 412.6h1.1M354.9 412.6h2.2M358.2 412.6h2.2M361.4 412.6h2.2M365.8 412.6h7.6M374.5 412.6h1.1M378.9 412.6h2.2M386.5 412.6h2.2M395.2 412.6h1.1M397.4 412.6h1.1M399.6 412.6h1.1M402.9 412.6h1.1M407.2 412.6h1.1M409.4 412.6h2.2M412.7 412.6h1.1M417.0 412.6h2.2M420.3 412.6h1.1M423.6 412.6h1.1M429.0 412.6h1.1M431.2 412.6h1.1M435.6 412.6h2.2M438.8 412.6h2.2M344.0 413.7h2.2M347.3 413.7h2.2M350.5 413.7h1.1M352.7 413.7h1.1M354.9 413.7h2.2M358.2 413.7h2.2M361.4 413.7h2.2M365.8 413.7h1.1M368.0 413.7h4.4M374.5 413.7h1.1M376.7 413.7h1.1M378.9 413.7h1.1M384.3 413.7h1.1M386.5 413.7h2.2M389.8 413.7h1.1M393.0 413.7h3.3M397.4 413.7h3.3M401.8 413.7h2.2M405.0 413.7h1.1M407.2 413.7h1.1M410.5 413.7h1.1M412.7 413.7h2.2M415.9 413.7h1.1M421.4 413.7h2.2M424.7 413.7h4.4M431.2 413.7h1.1M433.4 413.7h1.1M435.6 413.7h2.2M438.8 413.7h2.2M344.0 414.8h2.2M347.3 414.8h2.2M352.7 414.8h5.4M360.3 414.8h2.2M363.6 414.8h2.2M366.9 414.8h2.2M373.4 414.8h2.2M378.9 414.8h1.1M381.1 414.8h1.1M384.3 414.8h2.2M387.6 414.8h2.2M392.0 414.8h4.4M397.4 414.8h3.3M402.9 414.8h1.1M407.2 414.8h2.2M412.7 414.8h2.2M417.0 414.8h5.4M424.7 414.8h1.1M426.8 414.8h3.3M431.2 414.8h1.1M435.6 414.8h2.2M439.9 414.8h1.1M344.0 415.9h1.1M348.4 415.9h10.9M361.4 415.9h2.2M365.8 415.9h3.3M374.5 415.9h5.4M381.1 415.9h1.1M383.2 415.9h3.3M388.7 415.9h7.6M397.4 415.9h1.1M400.7 415.9h9.8M412.7 415.9h2.2M419.2 415.9h1.1M421.4 415.9h16.3M438.8 415.9h2.2M344.0 417.0h3.3M348.4 417.0h1.1M350.5 417.0h1.1M352.7 417.0h1.1M356.0 417.0h1.1M358.2 417.0h2.2M362.5 417.0h6.5M370.2 417.0h2.2M373.4 417.0h2.2M376.7 417.0h1.1M383.2 417.0h4.4M389.8 417.0h1.1M392.0 417.0h2.2M396.3 417.0h1.1M398.5 417.0h1.1M400.7 417.0h1.1M402.9 417.0h2.2M406.1 417.0h1.1M409.4 417.0h4.4M414.8 417.0h3.3M420.3 417.0h2.2M424.7 417.0h1.1M426.8 417.0h3.3M432.3 417.0h1.1M436.6 417.0h2.2M439.9 417.0h1.1M345.1 418.1h2.2M348.4 418.1h1.1M350.5 418.1h3.3M358.2 418.1h1.1M360.3 418.1h2.2M363.6 418.1h3.3M369.1 418.1h2.2M373.4 418.1h1.1M378.9 418.1h1.1M384.3 418.1h1.1M392.0 418.1h1.1M394.1 418.1h1.1M397.4 418.1h2.2M400.7 418.1h1.1M406.1 418.1h3.3M412.7 418.1h4.4M418.1 418.1h5.4M424.7 418.1h1.1M426.8 418.1h1.1M429.0 418.1h2.2M432.3 418.1h1.1M434.5 418.1h5.4M346.2 419.1h2.2M353.8 419.1h2.2M357.1 419.1h2.2M368.0 419.1h1.1M370.2 419.1h7.6M382.1 419.1h1.1M384.3 419.1h1.1M386.5 419.1h1.1M389.8 419.1h5.4M396.3 419.1h1.1M398.5 419.1h2.2M401.8 419.1h2.2M405.0 419.1h1.1M407.2 419.1h1.1M411.6 419.1h1.1M413.8 419.1h1.1M415.9 419.1h2.2M420.3 419.1h1.1M422.5 419.1h1.1M424.7 419.1h1.1M426.8 419.1h2.2M431.2 419.1h1.1M433.4 419.1h2.2M345.1 420.2h1.1M347.3 420.2h1.1M349.4 420.2h1.1M352.7 420.2h1.1M354.9 420.2h2.2M358.2 420.2h2.2M362.5 420.2h3.3M366.9 420.2h2.2M372.3 420.2h3.3M376.7 420.2h1.1M380.0 420.2h3.3M385.4 420.2h1.1M387.6 420.2h1.1M392.0 420.2h1.1M398.5 420.2h2.2M402.9 420.2h2.2M408.3 420.2h3.3M413.8 420.2h1.1M415.9 420.2h1.1M418.1 420.2h2.2M422.5 420.2h2.2M425.7 420.2h3.3M433.4 420.2h2.2M436.6 420.2h4.4M346.2 421.3h2.2M350.5 421.3h1.1M356.0 421.3h1.1M359.3 421.3h2.2M363.6 421.3h4.4M369.1 421.3h2.2M372.3 421.3h2.2M377.8 421.3h1.1M380.0 421.3h3.3M386.5 421.3h1.1M389.8 421.3h1.1M394.1 421.3h2.2M397.4 421.3h2.2M400.7 421.3h4.4M406.1 421.3h1.1M409.4 421.3h2.2M413.8 421.3h1.1M417.0 421.3h1.1M421.4 421.3h1.1M423.6 421.3h2.2M426.8 421.3h1.1M429.0 421.3h1.1M434.5 421.3h1.1M437.7 421.3h1.1M439.9 421.3h1.1M346.2 422.4h3.3M357.1 422.4h3.3M362.5 422.4h2.2M366.9 422.4h1.1M369.1 422.4h1.1M371.2 422.4h4.4M380.0 422.4h3.3M385.4 422.4h2.2M388.7 422.4h1.1M392.0 422.4h1.1M394.1 422.4h3.3M399.6 422.4h1.1M402.9 422.4h1.1M405.0 422.4h1.1M409.4 422.4h1.1M411.6 422.4h1.1M414.8 422.4h3.3M419.2 422.4h1.1M422.5 422.4h1.1M432.3 422.4h1.1M437.7 422.4h1.1M344.0 423.5h3.3M350.5 423.5h1.1M353.8 423.5h1.1M357.1 423.5h1.1M359.3 423.5h4.4M366.9 423.5h1.1M370.2 423.5h4.4M377.8 423.5h2.2M382.1 423.5h2.2M385.4 423.5h1.1M387.6 423.5h2.2M390.9 423.5h1.1M399.6 423.5h1.1M402.9 423.5h3.3M407.2 423.5h1.1M413.8 423.5h2.2M417.0 423.5h2.2M421.4 423.5h5.4M427.9 423.5h4.4M434.5 423.5h2.2M439.9 423.5h1.1M346.2 424.6h3.3M351.6 424.6h1.1M354.9 424.6h1.1M357.1 424.6h3.3M362.5 424.6h4.4M369.1 424.6h1.1M373.4 424.6h1.1M375.6 424.6h1.1M377.8 424.6h1.1M380.0 424.6h1.1M382.1 424.6h1.1M384.3 424.6h5.4M390.9 424.6h7.6M399.6 424.6h1.1M402.9 424.6h1.1M407.2 424.6h1.1M411.6 424.6h2.2M417.0 424.6h1.1M419.2 424.6h3.3M423.6 424.6h1.1M430.1 424.6h5.4M437.7 424.6h2.2M346.2 425.7h1.1M349.4 425.7h1.1M351.6 425.7h2.2M354.9 425.7h1.1M359.3 425.7h4.4M364.7 425.7h4.4M371.2 425.7h2.2M375.6 425.7h4.4M381.1 425.7h3.3M385.4 425.7h3.3M390.9 425.7h1.1M393.0 425.7h2.2M396.3 425.7h2.2M401.8 425.7h1.1M405.0 425.7h1.1M410.5 425.7h1.1M412.7 425.7h9.8M423.6 425.7h3.3M429.0 425.7h12.0M347.3 426.8h4.4M352.7 426.8h5.4M360.3 426.8h1.1M363.6 426.8h2.2M366.9 426.8h1.1M369.1 426.8h3.3M377.8 426.8h1.1M382.1 426.8h3.3M386.5 426.8h2.2M393.0 426.8h2.2M396.3 426.8h1.1M398.5 426.8h1.1M401.8 426.8h10.9M415.9 426.8h1.1M418.1 426.8h3.3M422.5 426.8h1.1M425.7 426.8h3.3M432.3 426.8h1.1M434.5 426.8h1.1M437.7 426.8h1.1M439.9 426.8h1.1M344.0 427.9h1.1M346.2 427.9h2.2M350.5 427.9h2.2M353.8 427.9h3.3M359.3 427.9h1.1M361.4 427.9h2.2M366.9 427.9h2.2M372.3 427.9h1.1M374.5 427.9h5.4M383.2 427.9h2.2M387.6 427.9h1.1M390.9 427.9h1.1M393.0 427.9h2.2M398.5 427.9h1.1M400.7 427.9h1.1M403.9 427.9h1.1M406.1 427.9h2.2M409.4 427.9h2.2M414.8 427.9h2.2M419.2 427.9h1.1M422.5 427.9h2.2M425.7 427.9h1.1M427.9 427.9h3.3M434.5 427.9h2.2M439.9 427.9h1.1M344.0 429.0h2.2M347.3 429.0h1.1M349.4 429.0h1.1M354.9 429.0h2.2M358.2 429.0h1.1M360.3 429.0h2.2M364.7 429.0h1.1M368.0 429.0h3.3M373.4 429.0h1.1M376.7 429.0h1.1M378.9 429.0h1.1M382.1 429.0h4.4M388.7 429.0h9.8M400.7 429.0h1.1M402.9 429.0h4.4M408.3 429.0h1.1M410.5 429.0h3.3M419.2 429.0h8.7M429.0 429.0h2.2M434.5 429.0h3.3M438.8 429.0h1.1M344.0 430.0h1.1M346.2 430.0h1.1M348.4 430.0h6.5M356.0 430.0h3.3M362.5 430.0h4.4M371.2 430.0h1.1M373.4 430.0h1.1M375.6 430.0h5.4M382.1 430.0h3.3M389.8 430.0h3.3M395.2 430.0h2.2M398.5 430.0h2.2M402.9 430.0h1.1M408.3 430.0h2.2M411.6 430.0h1.1M413.8 430.0h1.1M418.1 430.0h1.1M420.3 430.0h1.1M424.7 430.0h3.3M431.2 430.0h1.1M436.6 430.0h1.1M439.9 430.0h1.1M344.0 431.1h2.2M348.4 431.1h1.1M350.5 431.1h1.1M352.7 431.1h1.1M357.1 431.1h3.3M362.5 431.1h2.2M368.0 431.1h1.1M370.2 431.1h1.1M372.3 431.1h2.2M378.9 431.1h1.1M384.3 431.1h4.4M389.8 431.1h3.3M394.1 431.1h2.2M398.5 431.1h1.1M400.7 431.1h2.2M403.9 431.1h1.1M412.7 431.1h1.1M414.8 431.1h8.7M425.7 431.1h1.1M427.9 431.1h2.2M344.0 432.2h2.2M349.4 432.2h3.3M354.9 432.2h2.2M358.2 432.2h2.2M362.5 432.2h3.3M369.1 432.2h2.2M373.4 432.2h1.1M378.9 432.2h3.3M383.2 432.2h2.2M392.0 432.2h1.1M394.1 432.2h2.2M397.4 432.2h3.3M401.8 432.2h1.1M405.0 432.2h2.2M409.4 432.2h1.1M411.6 432.2h3.3M415.9 432.2h1.1M418.1 432.2h1.1M420.3 432.2h1.1M423.6 432.2h1.1M426.8 432.2h2.2M431.2 432.2h1.1M433.4 432.2h3.3M344.0 433.3h8.7M354.9 433.3h2.2M358.2 433.3h1.1M362.5 433.3h1.1M365.8 433.3h1.1M368.0 433.3h2.2M373.4 433.3h2.2M376.7 433.3h1.1M378.9 433.3h4.4M387.6 433.3h4.4M393.0 433.3h1.1M396.3 433.3h1.1M398.5 433.3h3.3M402.9 433.3h2.2M406.1 433.3h3.3M412.7 433.3h12.0M425.7 433.3h1.1M430.1 433.3h1.1M433.4 433.3h1.1M435.6 433.3h2.2M345.1 434.4h1.1M348.4 434.4h1.1M352.7 434.4h2.2M356.0 434.4h1.1M358.2 434.4h1.1M361.4 434.4h2.2M368.0 434.4h2.2M371.2 434.4h1.1M374.5 434.4h1.1M376.7 434.4h2.2M382.1 434.4h1.1M384.3 434.4h1.1M387.6 434.4h1.1M389.8 434.4h2.2M393.0 434.4h3.3M397.4 434.4h5.4M405.0 434.4h2.2M410.5 434.4h1.1M412.7 434.4h2.2M415.9 434.4h1.1M419.2 434.4h7.6M427.9 434.4h5.4M434.5 434.4h2.2M437.7 434.4h3.3M344.0 435.5h2.2M348.4 435.5h1.1M353.8 435.5h1.1M360.3 435.5h3.3M365.8 435.5h3.3M370.2 435.5h2.2M373.4 435.5h1.1M375.6 435.5h1.1M381.1 435.5h1.1M383.2 435.5h2.2M386.5 435.5h2.2M390.9 435.5h1.1M393.0 435.5h1.1M395.2 435.5h1.1M398.5 435.5h1.1M400.7 435.5h1.1M405.0 435.5h1.1M411.6 435.5h1.1M413.8 435.5h6.5M421.4 435.5h1.1M423.6 435.5h2.2M427.9 435.5h1.1M431.2 435.5h4.4M436.6 435.5h3.3M344.0 436.6h3.3M351.6 436.6h1.1M353.8 436.6h1.1M358.2 436.6h1.1M361.4 436.6h1.1M366.9 436.6h1.1M370.2 436.6h5.4M377.8 436.6h1.1M381.1 436.6h2.2M390.9 436.6h2.2M394.1 436.6h1.1M396.3 436.6h4.4M401.8 436.6h1.1M403.9 436.6h2.2M408.3 436.6h6.5M415.9 436.6h1.1M418.1 436.6h2.2M421.4 436.6h2.2M426.8 436.6h1.1M430.1 436.6h2.2M433.4 436.6h5.4M439.9 436.6h1.1M344.0 437.7h2.2M347.3 437.7h1.1M349.4 437.7h2.2M352.7 437.7h2.2M358.2 437.7h1.1M360.3 437.7h1.1M363.6 437.7h4.4M371.2 437.7h4.4M377.8 437.7h5.4M385.4 437.7h1.1M387.6 437.7h2.2M392.0 437.7h2.2M396.3 437.7h1.1M400.7 437.7h3.3M408.3 437.7h1.1M410.5 437.7h1.1M413.8 437.7h1.1M417.0 437.7h2.2M420.3 437.7h4.4M425.7 437.7h4.4M431.2 437.7h1.1M433.4 437.7h3.3M437.7 437.7h2.2M344.0 438.8h3.3M349.4 438.8h2.2M352.7 438.8h1.1M354.9 438.8h1.1M359.3 438.8h3.3M364.7 438.8h1.1M366.9 438.8h2.2M370.2 438.8h2.2M374.5 438.8h2.2M377.8 438.8h1.1M380.0 438.8h1.1M382.1 438.8h2.2M385.4 438.8h2.2M389.8 438.8h1.1M396.3 438.8h3.3M401.8 438.8h8.7M412.7 438.8h2.2M415.9 438.8h3.3M420.3 438.8h3.3M424.7 438.8h5.4M431.2 438.8h1.1M433.4 438.8h2.2M437.7 438.8h2.2M345.1 439.9h8.7M356.0 439.9h1.1M358.2 439.9h2.2M361.4 439.9h2.2M364.7 439.9h1.1M366.9 439.9h4.4M372.3 439.9h10.9M384.3 439.9h2.2M392.0 439.9h1.1M397.4 439.9h2.2M400.7 439.9h9.8M411.6 439.9h3.3M415.9 439.9h3.3M423.6 439.9h1.1M425.7 439.9h3.3M431.2 439.9h5.4M439.9 439.9h1.1M345.1 440.9h4.4M352.7 440.9h1.1M356.0 440.9h1.1M358.2 440.9h2.2M362.5 440.9h3.3M366.9 440.9h4.4M372.3 440.9h3.3M378.9 440.9h1.1M381.1 440.9h6.5M388.7 440.9h4.4M396.3 440.9h2.2M400.7 440.9h3.3M407.2 440.9h1.1M409.4 440.9h2.2M413.8 440.9h2.2M418.1 440.9h1.1M420.3 440.9h1.1M422.5 440.9h4.4M429.0 440.9h3.3M435.6 440.9h2.2M438.8 440.9h1.1M344.0 442.0h2.2M347.3 442.0h2.2M350.5 442.0h1.1M352.7 442.0h1.1M354.9 442.0h1.1M357.1 442.0h1.1M364.7 442.0h1.1M368.0 442.0h1.1M370.2 442.0h5.4M376.7 442.0h1.1M378.9 442.0h1.1M381.1 442.0h2.2M384.3 442.0h2.2M389.8 442.0h1.1M395.2 442.0h1.1M398.5 442.0h1.1M400.7 442.0h3.3M405.0 442.0h1.1M407.2 442.0h2.2M410.5 442.0h3.3M414.8 442.0h1.1M418.1 442.0h2.2M421.4 442.0h3.3M427.9 442.0h4.4M433.4 442.0h1.1M435.6 442.0h1.1M437.7 442.0h1.1M345.1 443.1h4.4M352.7 443.1h1.1M356.0 443.1h2.2M359.3 443.1h1.1M361.4 443.1h2.2M364.7 443.1h1.1M369.1 443.1h2.2M372.3 443.1h1.1M374.5 443.1h1.1M378.9 443.1h1.1M381.1 443.1h4.4M387.6 443.1h2.2M390.9 443.1h1.1M393.0 443.1h1.1M396.3 443.1h1.1M398.5 443.1h2.2M402.9 443.1h1.1M407.2 443.1h2.2M411.6 443.1h1.1M414.8 443.1h1.1M417.0 443.1h1.1M421.4 443.1h2.2M424.7 443.1h7.6M435.6 443.1h1.1M439.9 443.1h1.1M344.0 444.2h2.2M348.4 444.2h6.5M357.1 444.2h1.1M360.3 444.2h4.4M366.9 444.2h1.1M370.2 444.2h1.1M372.3 444.2h1.1M374.5 444.2h6.5M382.1 444.2h2.2M386.5 444.2h1.1M388.7 444.2h2.2M392.0 444.2h1.1M394.1 444.2h3.3M399.6 444.2h1.1M401.8 444.2h7.6M411.6 444.2h2.2M419.2 444.2h3.3M424.7 444.2h3.3M430.1 444.2h6.5M437.7 444.2h3.3M345.1 445.3h2.2M348.4 445.3h1.1M351.6 445.3h1.1M353.8 445.3h7.6M363.6 445.3h2.2M373.4 445.3h1.1M377.8 445.3h3.3M384.3 445.3h2.2M388.7 445.3h6.5M397.4 445.3h1.1M400.7 445.3h5.4M407.2 445.3h7.6M417.0 445.3h2.2M421.4 445.3h1.1M430.1 445.3h5.4M436.6 445.3h3.3M344.0 446.4h2.2M350.5 446.4h1.1M352.7 446.4h2.2M356.0 446.4h1.1M358.2 446.4h3.3M362.5 446.4h3.3M370.2 446.4h1.1M372.3 446.4h1.1M374.5 446.4h2.2M378.9 446.4h1.1M381.1 446.4h3.3M388.7 446.4h2.2M392.0 446.4h1.1M394.1 446.4h1.1M400.7 446.4h4.4M406.1 446.4h1.1M410.5 446.4h1.1M412.7 446.4h3.3M418.1 446.4h6.5M425.7 446.4h3.3M430.1 446.4h1.1M433.4 446.4h3.3M439.9 446.4h1.1M345.1 447.5h1.1M347.3 447.5h2.2M350.5 447.5h1.1M353.8 447.5h2.2M357.1 447.5h1.1M359.3 447.5h1.1M362.5 447.5h1.1M365.8 447.5h1.1M368.0 447.5h1.1M372.3 447.5h1.1M374.5 447.5h6.5M382.1 447.5h2.2M385.4 447.5h1.1M387.6 447.5h2.2M392.0 447.5h2.2M397.4 447.5h1.1M399.6 447.5h2.2M403.9 447.5h1.1M407.2 447.5h1.1M412.7 447.5h3.3M418.1 447.5h3.3M423.6 447.5h1.1M425.7 447.5h2.2M429.0 447.5h2.2M432.3 447.5h4.4M437.7 447.5h1.1M348.4 448.6h3.3M352.7 448.6h4.4M360.3 448.6h4.4M365.8 448.6h5.4M373.4 448.6h3.3M377.8 448.6h2.2M383.2 448.6h2.2M388.7 448.6h2.2M392.0 448.6h2.2M395.2 448.6h2.2M399.6 448.6h4.4M406.1 448.6h7.6M414.8 448.6h2.2M418.1 448.6h2.2M421.4 448.6h2.2M424.7 448.6h1.1M429.0 448.6h6.5M437.7 448.6h1.1M439.9 448.6h1.1M345.1 449.7h2.2M348.4 449.7h4.4M353.8 449.7h1.1M357.1 449.7h1.1M359.3 449.7h1.1M362.5 449.7h2.2M365.8 449.7h3.3M371.2 449.7h3.3M375.6 449.7h1.1M380.0 449.7h1.1M384.3 449.7h1.1M386.5 449.7h1.1M388.7 449.7h2.2M392.0 449.7h1.1M396.3 449.7h1.1M398.5 449.7h2.2M408.3 449.7h1.1M411.6 449.7h2.2M415.9 449.7h2.2M420.3 449.7h2.2M424.7 449.7h2.2M427.9 449.7h1.1M432.3 449.7h3.3M437.7 449.7h1.1M344.0 450.8h1.1M346.2 450.8h1.1M348.4 450.8h1.1M350.5 450.8h2.2M353.8 450.8h1.1M356.0 450.8h1.1M358.2 450.8h2.2M364.7 450.8h2.2M368.0 450.8h2.2M371.2 450.8h1.1M374.5 450.8h1.1M376.7 450.8h2.2M380.0 450.8h1.1M382.1 450.8h4.4M392.0 450.8h5.4M398.5 450.8h1.1M400.7 450.8h4.4M407.2 450.8h3.3M411.6 450.8h4.4M418.1 450.8h7.6M427.9 450.8h1.1M430.1 450.8h8.7M344.0 451.8h3.3M350.5 451.8h1.1M354.9 451.8h6.5M362.5 451.8h1.1M369.1 451.8h4.4M375.6 451.8h1.1M377.8 451.8h1.1M381.1 451.8h2.2M387.6 451.8h1.1M390.9 451.8h3.3M396.3 451.8h6.5M409.4 451.8h1.1M411.6 451.8h1.1M413.8 451.8h2.2M418.1 451.8h3.3M423.6 451.8h6.5M431.2 451.8h2.2M434.5 451.8h4.4M344.0 452.9h7.6M352.7 452.9h1.1M354.9 452.9h1.1M357.1 452.9h3.3M364.7 452.9h1.1M369.1 452.9h5.4M376.7 452.9h1.1M378.9 452.9h2.2M382.1 452.9h1.1M384.3 452.9h2.2M387.6 452.9h2.2M392.0 452.9h2.2M396.3 452.9h1.1M405.0 452.9h2.2M409.4 452.9h1.1M411.6 452.9h1.1M413.8 452.9h1.1M417.0 452.9h1.1M419.2 452.9h1.1M424.7 452.9h3.3M430.1 452.9h3.3M434.5 452.9h5.4M345.1 454.0h1.1M347.3 454.0h1.1M349.4 454.0h1.1M354.9 454.0h1.1M359.3 454.0h2.2M363.6 454.0h2.2M368.0 454.0h2.2M371.2 454.0h2.2M374.5 454.0h4.4M380.0 454.0h3.3M384.3 454.0h2.2M387.6 454.0h3.3M392.0 454.0h2.2M395.2 454.0h4.4M400.7 454.0h1.1M402.9 454.0h1.1M405.0 454.0h2.2M408.3 454.0h9.8M421.4 454.0h4.4M426.8 454.0h3.3M431.2 454.0h1.1M433.4 454.0h5.4M344.0 455.1h1.1M346.2 455.1h1.1M348.4 455.1h3.3M353.8 455.1h3.3M358.2 455.1h1.1M361.4 455.1h3.3M366.9 455.1h4.4M372.3 455.1h1.1M374.5 455.1h1.1M378.9 455.1h2.2M382.1 455.1h1.1M385.4 455.1h1.1M387.6 455.1h1.1M390.9 455.1h3.3M395.2 455.1h2.2M399.6 455.1h3.3M403.9 455.1h1.1M406.1 455.1h1.1M408.3 455.1h1.1M412.7 455.1h2.2M415.9 455.1h1.1M418.1 455.1h1.1M420.3 455.1h1.1M422.5 455.1h3.3M426.8 455.1h2.2M431.2 455.1h9.8M344.0 456.2h1.1M348.4 456.2h2.2M352.7 456.2h1.1M354.9 456.2h3.3M359.3 456.2h2.2M363.6 456.2h2.2M366.9 456.2h1.1M371.2 456.2h1.1M373.4 456.2h3.3M377.8 456.2h3.3M382.1 456.2h7.6M390.9 456.2h7.6M399.6 456.2h2.2M407.2 456.2h1.1M409.4 456.2h1.1M413.8 456.2h3.3M419.2 456.2h2.2M426.8 456.2h2.2M430.1 456.2h1.1M435.6 456.2h1.1M437.7 456.2h3.3M347.3 457.3h2.2M350.5 457.3h1.1M354.9 457.3h1.1M358.2 457.3h1.1M360.3 457.3h2.2M363.6 457.3h2.2M366.9 457.3h3.3M372.3 457.3h1.1M374.5 457.3h1.1M377.8 457.3h1.1M380.0 457.3h1.1M382.1 457.3h1.1M385.4 457.3h1.1M388.7 457.3h1.1M390.9 457.3h1.1M394.1 457.3h3.3M399.6 457.3h1.1M401.8 457.3h2.2M406.1 457.3h1.1M410.5 457.3h1.1M412.7 457.3h1.1M417.0 457.3h1.1M420.3 457.3h1.1M422.5 457.3h4.4M433.4 457.3h1.1M438.8 457.3h1.1M345.1 458.4h1.1M348.4 458.4h2.2M352.7 458.4h1.1M354.9 458.4h1.1M358.2 458.4h1.1M369.1 458.4h2.2M372.3 458.4h1.1M374.5 458.4h2.2M378.9 458.4h2.2M384.3 458.4h2.2M389.8 458.4h4.4M395.2 458.4h1.1M397.4 458.4h3.3M402.9 458.4h4.4M410.5 458.4h2.2M415.9 458.4h10.9M430.1 458.4h1.1M432.3 458.4h1.1M439.9 458.4h1.1M344.0 459.5h1.1M346.2 459.5h3.3M350.5 459.5h1.1M352.7 459.5h2.2M356.0 459.5h3.3M361.4 459.5h1.1M363.6 459.5h2.2M366.9 459.5h3.3M373.4 459.5h1.1M376.7 459.5h3.3M384.3 459.5h2.2M387.6 459.5h1.1M389.8 459.5h1.1M393.0 459.5h2.2M397.4 459.5h1.1M400.7 459.5h3.3M407.2 459.5h1.1M409.4 459.5h1.1M417.0 459.5h1.1M419.2 459.5h2.2M424.7 459.5h3.3M429.0 459.5h1.1M432.3 459.5h1.1M439.9 459.5h1.1M344.0 460.6h1.1M346.2 460.6h1.1M348.4 460.6h2.2M351.6 460.6h4.4M358.2 460.6h1.1M365.8 460.6h1.1M369.1 460.6h4.4M377.8 460.6h8.7M388.7 460.6h1.1M394.1 460.6h2.2M397.4 460.6h2.2M400.7 460.6h1.1M402.9 460.6h2.2M408.3 460.6h2.2M412.7 460.6h1.1M415.9 460.6h1.1M420.3 460.6h1.1M423.6 460.6h1.1M425.7 460.6h1.1M429.0 460.6h1.1M431.2 460.6h8.7M344.0 461.7h1.1M348.4 461.7h1.1M351.6 461.7h1.1M356.0 461.7h6.5M364.7 461.7h1.1M366.9 461.7h1.1M369.1 461.7h2.2M375.6 461.7h3.3M382.1 461.7h1.1M384.3 461.7h1.1M386.5 461.7h1.1M390.9 461.7h1.1M395.2 461.7h1.1M398.5 461.7h2.2M401.8 461.7h2.2M407.2 461.7h2.2M414.8 461.7h1.1M417.0 461.7h6.5M425.7 461.7h3.3M430.1 461.7h2.2M435.6 461.7h4.4M345.1 462.7h1.1M347.3 462.7h3.3M352.7 462.7h1.1M354.9 462.7h1.1M357.1 462.7h2.2M360.3 462.7h1.1M362.5 462.7h2.2M366.9 462.7h2.2M371.2 462.7h2.2M375.6 462.7h2.2M380.0 462.7h2.2M383.2 462.7h5.4M390.9 462.7h2.2M395.2 462.7h1.1M398.5 462.7h1.1M400.7 462.7h3.3M405.0 462.7h1.1M407.2 462.7h1.1M413.8 462.7h1.1M415.9 462.7h1.1M419.2 462.7h1.1M424.7 462.7h1.1M426.8 462.7h1.1M430.1 462.7h1.1M432.3 462.7h1.1M435.6 462.7h1.1M439.9 462.7h1.1M344.0 463.8h1.1M346.2 463.8h1.1M348.4 463.8h2.2M354.9 463.8h1.1M357.1 463.8h1.1M359.3 463.8h2.2M365.8 463.8h2.2M371.2 463.8h1.1M375.6 463.8h1.1M380.0 463.8h4.4M385.4 463.8h1.1M387.6 463.8h1.1M389.8 463.8h1.1M392.0 463.8h4.4M397.4 463.8h2.2M400.7 463.8h5.4M407.2 463.8h3.3M411.6 463.8h1.1M413.8 463.8h1.1M415.9 463.8h3.3M422.5 463.8h3.3M426.8 463.8h2.2M430.1 463.8h1.1M432.3 463.8h1.1M434.5 463.8h3.3M350.5 464.9h1.1M356.0 464.9h2.2M359.3 464.9h1.1M361.4 464.9h1.1M365.8 464.9h6.5M375.6 464.9h2.2M380.0 464.9h2.2M383.2 464.9h1.1M385.4 464.9h2.2M388.7 464.9h1.1M394.1 464.9h1.1M397.4 464.9h1.1M399.6 464.9h3.3M407.2 464.9h8.7M417.0 464.9h1.1M419.2 464.9h1.1M421.4 464.9h1.1M425.7 464.9h1.1M427.9 464.9h4.4M433.4 464.9h1.1M436.6 464.9h1.1M438.8 464.9h1.1M347.3 466.0h2.2M350.5 466.0h1.1M352.7 466.0h1.1M359.3 466.0h1.1M364.7 466.0h5.4M371.2 466.0h2.2M374.5 466.0h1.1M376.7 466.0h3.3M381.1 466.0h1.1M386.5 466.0h3.3M390.9 466.0h1.1M393.0 466.0h3.3M397.4 466.0h1.1M399.6 466.0h3.3M403.9 466.0h1.1M406.1 466.0h3.3M410.5 466.0h2.2M414.8 466.0h1.1M418.1 466.0h3.3M423.6 466.0h2.2M427.9 466.0h1.1M431.2 466.0h1.1M435.6 466.0h5.4M344.0 467.1h5.4M352.7 467.1h1.1M356.0 467.1h1.1M358.2 467.1h2.2M361.4 467.1h4.4M366.9 467.1h1.1M370.2 467.1h1.1M373.4 467.1h2.2M376.7 467.1h4.4M383.2 467.1h1.1M385.4 467.1h3.3M389.8 467.1h1.1M397.4 467.1h3.3M401.8 467.1h2.2M405.0 467.1h6.5M413.8 467.1h2.2M417.0 467.1h1.1M419.2 467.1h6.5M426.8 467.1h1.1M429.0 467.1h3.3M433.4 467.1h1.1M435.6 467.1h3.3M346.2 468.2h1.1M349.4 468.2h3.3M354.9 468.2h6.5M363.6 468.2h3.3M371.2 468.2h8.7M381.1 468.2h2.2M384.3 468.2h1.1M386.5 468.2h3.3M392.0 468.2h8.7M401.8 468.2h6.5M409.4 468.2h3.3M413.8 468.2h2.2M417.0 468.2h2.2M421.4 468.2h2.2M424.7 468.2h1.1M426.8 468.2h1.1M430.1 468.2h6.5M437.7 468.2h3.3M352.7 469.3h1.1M354.9 469.3h6.5M362.5 469.3h2.2M365.8 469.3h1.1M368.0 469.3h2.2M371.2 469.3h4.4M378.9 469.3h1.1M381.1 469.3h2.2M384.3 469.3h7.6M393.0 469.3h2.2M396.3 469.3h3.3M400.7 469.3h1.1M402.9 469.3h1.1M407.2 469.3h1.1M409.4 469.3h1.1M411.6 469.3h1.1M413.8 469.3h1.1M415.9 469.3h2.2M421.4 469.3h1.1M424.7 469.3h1.1M431.2 469.3h1.1M435.6 469.3h1.1M437.7 469.3h2.2M344.0 470.4h7.6M352.7 470.4h2.2M357.1 470.4h1.1M359.3 470.4h4.4M364.7 470.4h2.2M369.1 470.4h3.3M373.4 470.4h2.2M376.7 470.4h1.1M378.9 470.4h1.1M381.1 470.4h2.2M384.3 470.4h2.2M388.7 470.4h2.2M394.1 470.4h9.8M405.0 470.4h1.1M407.2 470.4h1.1M411.6 470.4h3.3M418.1 470.4h8.7M430.1 470.4h2.2M433.4 470.4h1.1M435.6 470.4h4.4M344.0 471.5h1.1M350.5 471.5h1.1M352.7 471.5h1.1M356.0 471.5h1.1M358.2 471.5h2.2M361.4 471.5h1.1M363.6 471.5h1.1M369.1 471.5h2.2M372.3 471.5h1.1M374.5 471.5h1.1M378.9 471.5h3.3M383.2 471.5h1.1M385.4 471.5h4.4M395.2 471.5h2.2M398.5 471.5h2.2M401.8 471.5h2.2M407.2 471.5h4.4M419.2 471.5h1.1M421.4 471.5h4.4M431.2 471.5h1.1M435.6 471.5h2.2M439.9 471.5h1.1M344.0 472.6h1.1M346.2 472.6h3.3M350.5 472.6h1.1M352.7 472.6h1.1M356.0 472.6h1.1M358.2 472.6h1.1M360.3 472.6h1.1M362.5 472.6h2.2M365.8 472.6h1.1M369.1 472.6h4.4M374.5 472.6h5.4M381.1 472.6h1.1M385.4 472.6h3.3M394.1 472.6h1.1M396.3 472.6h4.4M401.8 472.6h6.5M409.4 472.6h2.2M412.7 472.6h3.3M417.0 472.6h6.5M425.7 472.6h4.4M431.2 472.6h5.4M437.7 472.6h1.1M439.9 472.6h1.1M344.0 473.6h1.1M346.2 473.6h3.3M350.5 473.6h1.1M352.7 473.6h3.3M358.2 473.6h3.3M363.6 473.6h1.1M366.9 473.6h1.1M370.2 473.6h1.1M376.7 473.6h1.1M380.0 473.6h1.1M383.2 473.6h2.2M386.5 473.6h1.1M388.7 473.6h1.1M390.9 473.6h3.3M397.4 473.6h1.1M399.6 473.6h2.2M403.9 473.6h7.6M412.7 473.6h4.4M419.2 473.6h5.4M425.7 473.6h2.2M431.2 473.6h2.2M435.6 473.6h1.1M437.7 473.6h1.1M344.0 474.7h1.1M346.2 474.7h3.3M350.5 474.7h1.1M352.7 474.7h2.2M356.0 474.7h4.4M362.5 474.7h1.1M364.7 474.7h3.3M373.4 474.7h6.5M382.1 474.7h2.2M385.4 474.7h3.3M389.8 474.7h2.2M395.2 474.7h2.2M398.5 474.7h2.2M401.8 474.7h2.2M405.0 474.7h2.2M409.4 474.7h1.1M411.6 474.7h1.1M415.9 474.7h1.1M418.1 474.7h1.1M421.4 474.7h1.1M424.7 474.7h1.1M427.9 474.7h2.2M431.2 474.7h1.1M433.4 474.7h1.1M436.6 474.7h1.1M438.8 474.7h1.1M344.0 475.8h1.1M350.5 475.8h1.1M352.7 475.8h1.1M360.3 475.8h2.2M363.6 475.8h3.3M368.0 475.8h6.5M375.6 475.8h5.4M382.1 475.8h3.3M386.5 475.8h4.4M392.0 475.8h4.4M401.8 475.8h2.2M406.1 475.8h1.1M408.3 475.8h4.4M415.9 475.8h1.1M419.2 475.8h3.3M424.7 475.8h1.1M426.8 475.8h1.1M434.5 475.8h1.1M436.6 475.8h1.1M438.8 475.8h2.2M344.0 476.9h7.6M352.7 476.9h1.1M354.9 476.9h2.2M360.3 476.9h2.2M365.8 476.9h1.1M369.1 476.9h5.4M375.6 476.9h2.2M378.9 476.9h8.7M388.7 476.9h4.4M396.3 476.9h3.3M400.7 476.9h2.2M412.7 476.9h3.3M417.0 476.9h1.1M420.3 476.9h3.3M424.7 476.9h1.1M426.8 476.9h1.1M429.0 476.9h1.1M431.2 476.9h1.1M436.6 476.9h1.1M438.8 476.9h1.1" stroke="#151515" stroke-width="1.09" transform="translate(0 0.54)" fill="none"/></svg><div class="nm" style="top:107px">1497871471.png</div><span class="cb"></span><span class="dl">删除</span></div>
  <div class="card" id="c20" style="left:10px;top:530px"><svg class="abs" style="left:0;top:0" width="110" height="100" viewBox="95 563 110 100"><path d="M127.500 635.800a27.200 27.200 0 1 1 31.800 0z" fill="#fff"/><ellipse cx="143.300" cy="616.300" rx="24.800" ry="23" fill="#d9d9d9"/><path d="M127.500 635.800a27.200 27.200 0 1 1 31.800 0" fill="none" stroke="#111" stroke-width="1.700"/><path d="M141.800 611.500c.3 5-.8 9.500-2.200 13.500-3.600 1.800-5.900 5-5.500 8.800.5 4.300 4 6.400 9.500 6.400 5 0 7.900-2.300 7.600-7 -.2-3.500-1.600-6-5.100-7.800-1.800-3.500-1.500-9-2-13.900z" fill="#d9d9d9" stroke="#111" stroke-width="1.600" stroke-linejoin="round"/><path d="M115.500 606c0-1.600.8-2.200 2.500-2.100 7.500.5 14 .5 20.500 0 1.300-.1 2 .5 2 2 0 4-.6 8.500-2.500 11-3.500 2.800-15 2.800-19.500-.8-2.300-2.800-3-6.500-3-10.100z" fill="#fff" stroke="#111" stroke-width="1.700"/><path d="M147.500 606.200c0-1.500.7-2.100 2.200-2 7 .3 13-.3 19-1 1.500-.2 2.300.5 2.300 2 0 4.500-.8 8.500-2.800 11.300-4 2.500-13.500 2.300-18-.5-2-2.300-2.700-6.300-2.700-9.800z" fill="#fff" stroke="#111" stroke-width="1.700"/><path d="M140.500 609.500q3.500-1.200 7 0" fill="none" stroke="#111" stroke-width="1.600"/><path d="M171 592c.6 6.500 2 10.300 11 12-8.500 1.300-10.300 4-11 9.500-.8-5.500-2.800-8.300-9.300-9.500 6.800-1.500 8.600-5.300 9.300-12z" fill="#fff" stroke="#111" stroke-width="1.400" stroke-linejoin="round"/></svg><div class="nm" style="top:105px">0340.png</div><span class="cb"></span><span class="dl">删除</span></div>
  <div class="card" id="c21" style="left:132px;top:530px"><svg class="abs" style="left:0;top:0" width="110" height="104" viewBox="217 563 110 104"><rect x="247" y="566" width="46" height="97" fill="#fff"/><path d="M247 573.500h46M247 586.500h46M247 602h46M247 610.500h46M247 643h46M247 650.500h46" stroke="#f1f1f1" stroke-width=".6"/><path d="M263.5 567.300l-.8 3" stroke="#e8242c" stroke-width=".9"/><path d="M266.5 571.0c-2.7 -2.1 -2.7 -4.5 0 -2.7 2.7 -1.8 2.7 0.6 0 2.7z" fill="#e8242c"/><text x="269.2" y="570.600" font-family="Liberation Sans, Noto Sans CJK SC, sans-serif" font-size="4.600" fill="#666" opacity=".85">DAD</text><path d="M267.4 575.300l-.6 3.200" stroke="#e8242c" stroke-width=".9"/><path d="M271.2 579.2c-2.7 -2.1 -2.7 -4.5 0 -2.7 2.7 -1.8 2.7 0.6 0 2.7z" fill="#e8242c"/><text x="267.0" y="583.800" font-family="Liberation Sans, Noto Sans CJK SC, sans-serif" font-size="3.800" fill="#444" opacity=".7">成都</text><path d="M260.5 589.300l-.6 3.200" stroke="#e8242c" stroke-width=".9"/><path d="M264.0 593.2c-2.7 -2.1 -2.7 -4.5 0 -2.7 2.7 -1.8 2.7 0.6 0 2.7z" fill="#e8242c"/><text x="260.0" y="598.200" font-family="Liberation Sans, Noto Sans CJK SC, sans-serif" font-size="3.800" fill="#c44" opacity=".7">成都</text><rect x="268.2" y="588" width="12" height="12" fill="#777"/><path d="M269.0 590h10M269.0 593h10M269.0 596h10M269.0 598.500h10" stroke="#ccc" stroke-width=".9" stroke-dasharray="1.500 1.200 .8 1"/><path d="M260.3 603.300v4.400" stroke="#444" stroke-width=".8"/><path d="M262.0 605.500h12" stroke="#aaa" stroke-width=".9" stroke-dasharray="1.300 .8"/><path d="M278.0 608.4c-2.6 -2.0 -2.6 -4.3 0 -2.6 2.6 -1.7 2.6 0.6 0 2.6z" fill="#e8242c"/><rect x="248.5" y="613.5" width="43" height="23" fill="#fff" stroke="#d0d0d6" stroke-width=".7"/><path d="M251.5 617.4h36" stroke="#80828e" stroke-width=".9" stroke-dasharray="2.200 .7 3.500 .6 1.500 .8" opacity=".65"/><path d="M251.5 620.3h36" stroke="#80828e" stroke-width=".9" stroke-dasharray="2.200 .7 3.500 .6 1.500 .8" opacity=".65"/><path d="M251.5 623.3h36" stroke="#80828e" stroke-width=".9" stroke-dasharray="2.200 .7 3.500 .6 1.500 .8" opacity=".65"/><path d="M251.5 626.2h36" stroke="#80828e" stroke-width=".9" stroke-dasharray="2.200 .7 3.500 .6 1.500 .8" opacity=".65"/><path d="M251.5 629.3h36" stroke="#80828e" stroke-width=".9" stroke-dasharray="2.200 .7 3.500 .6 1.500 .8" opacity=".65"/><path d="M251.5 632.2h19.8" stroke="#80828e" stroke-width=".9" stroke-dasharray="2.200 .7 3.500 .6 1.500 .8" opacity=".65"/><rect x="262.0" y="634" width="17" height="5" fill="#fff"/><path d="M263.5 635l-.8 3" stroke="#e8242c" stroke-width=".9"/><path d="M266.5 638.7c-2.7 -2.1 -2.7 -4.5 0 -2.7 2.7 -1.8 2.7 0.6 0 2.7z" fill="#e8242c"/><text x="269.2" y="638.400" font-family="Liberation Sans, Noto Sans CJK SC, sans-serif" font-size="4.600" fill="#666" opacity=".85">DAD</text><path d="M253.5 644.500l-.8 3" stroke="#e8242c" stroke-width=".9"/><path d="M256.5 648.2c-2.7 -2.1 -2.7 -4.5 0 -2.7 2.7 -1.8 2.7 0.6 0 2.7z" fill="#e8242c"/><text x="259.3" y="648" font-family="Liberation Sans, Noto Sans CJK SC, sans-serif" font-size="4.600" fill="#666" opacity=".85">DAD</text><path d="M269.5 646.800h19" stroke="#bbb" stroke-width=".8" stroke-dasharray="1.200 .7"/><path d="M267.0 652.500l-.6 3.200" stroke="#e8242c" stroke-width=".9"/><path d="M271.0 656.6c-2.9 -2.2 -2.9 -4.8 0 -2.9 2.9 -1.9 2.9 0.6 0 2.9z" fill="#e8242c"/><text x="266.5" y="661.300" font-family="Liberation Sans, Noto Sans CJK SC, sans-serif" font-size="3.800" fill="#c44" opacity=".7">成都</text></svg><div class="nm" style="top:108px">image.png</div><span class="cb"></span><span class="dl">删除</span></div>
  <div class="card" id="c22" style="left:254px;top:530px"><svg class="abs" style="left:0;top:0" width="110" height="104" viewBox="339 563 110 104"><rect x="367" y="566" width="50" height="97" fill="#fff"/><path d="M367 573.500h50M367 586.500h50M367 602h50M367 610.500h50M367 643h50M367 650.500h50" stroke="#f1f1f1" stroke-width=".6"/><path d="M385.5 567.300l-.8 3" stroke="#e8242c" stroke-width=".9"/><path d="M388.5 571.0c-2.7 -2.1 -2.7 -4.5 0 -2.7 2.7 -1.8 2.7 0.6 0 2.7z" fill="#e8242c"/><text x="391.2" y="570.600" font-family="Liberation Sans, Noto Sans CJK SC, sans-serif" font-size="4.600" fill="#666" opacity=".85">DAD</text><path d="M389.4 575.300l-.6 3.200" stroke="#e8242c" stroke-width=".9"/><path d="M393.2 579.2c-2.7 -2.1 -2.7 -4.5 0 -2.7 2.7 -1.8 2.7 0.6 0 2.7z" fill="#e8242c"/><text x="389.0" y="583.800" font-family="Liberation Sans, Noto Sans CJK SC, sans-serif" font-size="3.800" fill="#444" opacity=".7">成都</text><path d="M382.5 589.300l-.6 3.200" stroke="#e8242c" stroke-width=".9"/><path d="M386.0 593.2c-2.7 -2.1 -2.7 -4.5 0 -2.7 2.7 -1.8 2.7 0.6 0 2.7z" fill="#e8242c"/><text x="382.0" y="598.200" font-family="Liberation Sans, Noto Sans CJK SC, sans-serif" font-size="3.800" fill="#c44" opacity=".7">成都</text><rect x="390.2" y="588" width="12" height="12" fill="#777"/><path d="M391.0 590h10M391.0 593h10M391.0 596h10M391.0 598.500h10" stroke="#ccc" stroke-width=".9" stroke-dasharray="1.500 1.200 .8 1"/><path d="M382.3 603.300v4.400" stroke="#444" stroke-width=".8"/><path d="M384.0 605.500h12" stroke="#aaa" stroke-width=".9" stroke-dasharray="1.300 .8"/><path d="M400.0 608.4c-2.6 -2.0 -2.6 -4.3 0 -2.6 2.6 -1.7 2.6 0.6 0 2.6z" fill="#e8242c"/><rect x="369.5" y="612.5" width="45" height="24" fill="#fff" stroke="#d0d0d6" stroke-width=".7"/><path d="M371.5 616.9h40" stroke="#80828e" stroke-width=".9" stroke-dasharray="2.200 .7 3.500 .6 1.500 .8" opacity=".65"/><path d="M371.5 619.8h40" stroke="#80828e" stroke-width=".9" stroke-dasharray="2.200 .7 3.500 .6 1.500 .8" opacity=".65"/><path d="M371.5 622.8h40" stroke="#80828e" stroke-width=".9" stroke-dasharray="2.200 .7 3.500 .6 1.500 .8" opacity=".65"/><path d="M371.5 625.7h40" stroke="#80828e" stroke-width=".9" stroke-dasharray="2.200 .7 3.500 .6 1.500 .8" opacity=".65"/><path d="M371.5 628.8h40" stroke="#80828e" stroke-width=".9" stroke-dasharray="2.200 .7 3.500 .6 1.500 .8" opacity=".65"/><path d="M371.5 631.7h22.0" stroke="#80828e" stroke-width=".9" stroke-dasharray="2.200 .7 3.500 .6 1.500 .8" opacity=".65"/><rect x="384.0" y="634" width="17" height="5" fill="#fff"/><path d="M385.5 635l-.8 3" stroke="#e8242c" stroke-width=".9"/><path d="M388.5 638.7c-2.7 -2.1 -2.7 -4.5 0 -2.7 2.7 -1.8 2.7 0.6 0 2.7z" fill="#e8242c"/><text x="391.2" y="638.400" font-family="Liberation Sans, Noto Sans CJK SC, sans-serif" font-size="4.600" fill="#666" opacity=".85">DAD</text><path d="M373.5 644.500l-.8 3" stroke="#e8242c" stroke-width=".9"/><path d="M376.5 648.2c-2.7 -2.1 -2.7 -4.5 0 -2.7 2.7 -1.8 2.7 0.6 0 2.7z" fill="#e8242c"/><text x="379.3" y="648" font-family="Liberation Sans, Noto Sans CJK SC, sans-serif" font-size="4.600" fill="#666" opacity=".85">DAD</text><path d="M389.5 646.800h23" stroke="#bbb" stroke-width=".8" stroke-dasharray="1.200 .7"/><path d="M389.0 652.500l-.6 3.200" stroke="#e8242c" stroke-width=".9"/><path d="M393.0 656.6c-2.9 -2.2 -2.9 -4.8 0 -2.9 2.9 -1.9 2.9 0.6 0 2.9z" fill="#e8242c"/><text x="388.5" y="661.300" font-family="Liberation Sans, Noto Sans CJK SC, sans-serif" font-size="3.800" fill="#c44" opacity=".7">成都</text></svg><div class="nm" style="top:108px">image.png</div><span class="cb"></span><span class="dl">删除</span></div>
</div>
<div id="editor" class="abs"></div>
<div id="tbline" class="abs"></div>
<svg class="abs" id="tb" style="left:552px;top:33px" width="500" height="91" viewBox="552 33 500 91" font-family="Liberation Sans, sans-serif">
<defs>
<path id="dd" d="M0 0h6l-3 3z" fill="#1a1a1a"/>
<linearGradient id="gAct" x1="0" y1="0" x2="0" y2="1"><stop offset="0" stop-color="#fde2a6"/><stop offset="1" stop-color="#fde6b0"/></linearGradient>
<linearGradient id="gSun" x1="0" y1="0" x2="0" y2="1"><stop offset="0" stop-color="#c41616"/><stop offset=".4" stop-color="#e06a10"/><stop offset=".68" stop-color="#f0a81c"/><stop offset="1" stop-color="#3c1c0c"/></linearGradient>
<linearGradient id="gDoc" x1="0" y1="0" x2="0" y2="1"><stop offset="0" stop-color="#cfe3f5"/><stop offset=".6" stop-color="#fff"/></linearGradient>
</defs>
<!-- row 1 -->
<text x="561.4" y="51" font-family="Liberation Serif, serif" font-weight="bold" font-size="15" fill="#222">B</text>
<text x="586" y="51" font-family="Liberation Serif, serif" font-weight="bold" font-style="italic" font-size="15" fill="#222">I</text>
<text x="608.6" y="50.6" font-family="Liberation Serif, serif" font-size="15" fill="#222">U</text>
<rect x="609" y="52" width="10" height="1.2" fill="#222"/>
<text x="632.4" y="50" font-family="Liberation Serif, serif" font-size="16.5" fill="#222">A</text>
<use href="#dd" x="651" y="45"/>
<g opacity=".8"><ellipse cx="669" cy="47" rx="3.600" ry="2.400" fill="#f8c08c"/><ellipse cx="675.500" cy="45.500" rx="2.600" ry="2.400" fill="#f9cf98"/><circle cx="670" cy="45" r="1.400" fill="#f4a4a4"/></g>
<text x="666" y="51" font-family="Liberation Serif, serif" font-weight="bold" font-size="15.5" fill="#2a2a2a">T</text>
<use href="#dd" x="685" y="45"/>
<rect x="699" y="41" width="10" height="9" fill="#f7bd4a"/>
<text x="699.3" y="48" font-size="9.500" fill="#000" stroke="#000" stroke-width=".25" textLength="9.700" lengthAdjust="spacingAndGlyphs">ab</text>
<path d="M704 51.800l1-2.600 7.200-7.400 1.700 1.700-7.300 7.300z" fill="#f2c23a" stroke="#6a4a20" stroke-width=".7"/>
<path d="M711.400 42.600l1-1a1.200 1.200 0 0 1 1.700 1.700l-1 1z" fill="#e02020"/>
<path d="M704 51.800l.6-1.600 1 1z" fill="#222"/>
<use href="#dd" x="719" y="45"/>
<rect x="731" y="37" width="1" height="18" fill="#b8bfd6"/>
<rect x="737.5" y="35.5" width="21" height="26" rx="2" fill="url(#gAct)" stroke="#e3b56c"/>
<path d="M742 40.5h14M742 42.5h10M742 44.5h14M742 46.5h10M742 48.5h14M742 50.5h10" stroke="#2a2a2a" stroke-width="1"/>
<path d="M766 40.5h14M768 42.5h10M766 44.5h14M768 46.5h10M766 48.5h14M768 50.5h10" stroke="#333" stroke-width="1"/>
<path d="M790 40.5h14M794 42.5h10M790 44.5h14M794 46.5h10M790 48.5h14M794 50.5h10" stroke="#333" stroke-width="1"/>
<path d="M814 40.5h14M814 42.5h14M814 44.5h14M814 46.5h14M814 48.5h14M814 50.5h14" stroke="#333" stroke-width="1"/>
<!-- indent -->
<path d="M839 40.5h12M839 48.5h12M842 50.5h9" stroke="#333" stroke-width="1"/>
<path d="M839 43h8M839 46h8" stroke="#333" stroke-width="1.8"/>
<path d="M848 44.5h3.5M850 42.5l2 2-2 2" stroke="#3a86e0" stroke-width="1.2" fill="none"/>
<!-- rowspacing top -->
<path d="M863 46.5h14M863 48.5h10M863 50.5h14M863 52.5h10" stroke="#111" stroke-width="1"/>
<path d="M869 45v-6M866.8 41.5l2.2-3 2.2 3" stroke="#3a86e0" stroke-width="1.2" fill="none"/>
<use href="#dd" x="882" y="45"/>
<!-- rowspacing bottom -->
<path d="M897 38.5h14M897 40.5h10M897 42.5h14M897 44.5h10" stroke="#111" stroke-width="1"/>
<path d="M902.5 46v6.5M900.3 50l2.2 3 2.2-3" stroke="#3a86e0" stroke-width="1.2" fill="none"/>
<use href="#dd" x="916" y="45"/>
<!-- lineheight -->
<path d="M937 41.5h8M937 44.5h8M937 47.5h8M937 50.5h8" stroke="#111" stroke-width="1.2"/>
<path d="M932.5 44.5v-6M930.5 40.8l2-2.8 2 2.8M932.5 47.5v6M930.5 51.2l2 2.8 2-2.8" stroke="#3a86e0" stroke-width="1.1" fill="none"/>
<use href="#dd" x="950" y="45"/>
<!-- kerning A -->
<text x="963.6" y="53.6" font-size="17" fill="#5e5656">A</text>
<path d="M964.5 39.5h12M966 38l-1.6 1.5 1.6 1.5M975 38l1.6 1.5-1.6 1.5" stroke="#5e5656" stroke-width="1" fill="none"/>
<use href="#dd" x="984" y="45"/>
<rect x="996" y="37" width="1" height="18" fill="#b8bfd6"/>
<!-- eraser -->
<g transform="translate(1014 45.5) rotate(-40)"><rect x="-9" y="-3.6" width="18" height="7.2" rx="1.6" fill="#f4f4f4" stroke="#b8b8b8" stroke-width=".8"/><path d="M3 -3.6h4.4a1.6 1.6 0 0 1 1.6 1.6v4a1.6 1.6 0 0 1 -1.6 1.6h-4.4z" fill="#3f8ee8"/><path d="M3 -3.6h4.4a1.6 1.6 0 0 1 1.6 1.6v1.2h-6z" fill="#8cc0f4"/><path d="M-9 2.2h12" stroke="#a89088" stroke-width=".8"/></g>
<!-- fullscreen -->
<path d="M1034 52.500l12.500-12.500M1042 39.500h4.700v4.700M1033.500 48v4.800h4.800" stroke="#444" stroke-width="1" fill="none"/>
<!-- row 2 -->
<path d="M560.5 70.5h8.5l3 3v10h-11.5z" fill="url(#gDoc)" stroke="#b3958c" stroke-width="1"/>
<path d="M569 70.5v3h3" fill="#fff" stroke="#b3958c" stroke-width=".8"/>
<!-- combos -->
<rect x="578.5" y="66.5" width="64" height="26" rx="3" fill="#fff" stroke="#cdcdcd"/>
<rect x="633" y="67" width="1" height="20" fill="#d0d0d0"/>
<text x="584" y="81" font-family="Liberation Sans, Noto Sans CJK SC, sans-serif" font-size="11.6" fill="#555">微软雅黑</text>
<rect x="629.5" y="68" width="3.4" height="18" fill="#fff"/>
<use href="#dd" x="636.5" y="76"/>
<rect x="645.5" y="66.5" width="46" height="26" rx="3" fill="#fff" stroke="#cdcdcd"/>
<rect x="682" y="67" width="1" height="20" fill="#d0d0d0"/>
<text x="652" y="81" font-size="12" fill="#555">16px</text>
<use href="#dd" x="685.5" y="76"/>
<!-- table -->
<rect x="700" y="71" width="13.5" height="12" fill="#fff" stroke="#3c7fd6" stroke-width="1"/>
<rect x="700" y="70.5" width="13.5" height="3" fill="#3c7fd6"/>
<path d="M700 77h13.5M700 80h13.5M704.5 73v10M709 73v10" stroke="#5b97e2" stroke-width="1"/>
<!-- snapscreen -->
<path d="M722.5 72.5a6 6 0 0 1 9 0M724.3 74.8a3.6 3.6 0 0 1 5.4 0" stroke="#3a78cc" stroke-width="1.2" fill="none"/>
<rect x="729.5" y="73.5" width="8.5" height="7" fill="#9cc4f0" stroke="#3a78cc" stroke-width="1"/>
<path d="M732 83h5" stroke="#3a78cc" stroke-width="1.2"/>
<rect x="723.5" y="77.5" width="9.5" height="7.5" fill="#fff" stroke="#9a8a88" stroke-width="1"/>
<rect x="725" y="79" width="6.5" height="4.5" fill="url(#gSun)"/>
<!-- wordimage (disabled) -->
<g opacity=".45"><rect x="747.5" y="69.5" width="11.5" height="11" fill="#fff" stroke="#78b0ec" stroke-width="1"/>
<text x="749" y="79" font-size="9" font-weight="bold" fill="#78b0ec">W</text>
<rect x="752.5" y="77.500" width="10.5" height="7.500" fill="#fff" stroke="#b8b0b0" stroke-width="1"/>
<rect x="754" y="79" width="7.5" height="4.5" fill="#f0c070"/></g>
<!-- word -->
<rect x="771.5" y="71" width="13" height="12.500" fill="#fff" stroke="#3a82dc" stroke-width="1"/>
<rect x="771" y="70" width="14" height="2" fill="#3a82dc"/>
<path d="M771 83.500h14" stroke="#1a4a9a" stroke-width="1" stroke-dasharray="1.500 1"/>
<text x="772.6" y="81.500" font-size="10" font-weight="bold" fill="#3a82dc" textLength="10.800" lengthAdjust="spacingAndGlyphs">W</text>
<!-- image -->
<rect x="795.5" y="71.500" width="15" height="11" fill="#fff" stroke="#aaa2a2" stroke-width="1"/>
<rect x="797" y="73" width="12" height="8" fill="url(#gSun)"/>
<!-- multi image -->
<rect x="817.5" y="69.500" width="14" height="10.500" fill="#fff" stroke="#b4b0c0" stroke-width="1"/>
<rect x="818.500" y="71.500" width="14" height="10.500" fill="#fff" stroke="#b4b0c0" stroke-width="1"/>
<rect x="819.5" y="73.500" width="14.500" height="11" fill="#fff" stroke="#b0a8a8" stroke-width="1"/>
<rect x="821" y="75" width="11.500" height="8" fill="url(#gSun)"/>
<path d="M833.300 79.500v6.500M830 82.800h6.600" stroke="#86c428" stroke-width="2.400"/>
<!-- film -->
<rect x="844" y="69" width="14.500" height="15" fill="#4c4c4c"/>
<rect x="847" y="70" width="8.500" height="6" fill="#6aaaea"/>
<rect x="847" y="77" width="8.500" height="6" fill="#6aaaea"/>
<path d="M845.500 70v14M857 70v14" stroke="#fff" stroke-width="1.500" stroke-dasharray="1.500 1.300"/>
<!-- hr -->
<rect x="868" y="75.600" width="14" height="1.200" fill="#111"/>
<rect x="890" y="68" width="1" height="18" fill="#b8bfd6"/>
<!-- active + -->
<rect x="896" y="66" width="22" height="27" fill="#fde3a8"/>
<rect x="900" y="70.800" width="12.600" height="12.600" rx="2.500" fill="none" stroke="#46566a" stroke-width="1.500"/>
<path d="M906.250 73.800v7M902.750 77.300h7" stroke="#48525c" stroke-width="1.300"/>
<!-- brush -->
<path d="M938.800 70.600l1.600 1.600-4 4.200-1.800-1.800z" fill="#b87830" stroke="#7a4a18" stroke-width=".6"/>
<path d="M933.800 73.600l3.400 3.400-1.400 1.600-3.600-3.400z" fill="#c8c8c8" stroke="#666" stroke-width=".6"/>
<path d="M931.800 75.200l3.800 3.800c-.6 2.600-2.400 4.600-5.400 5.200-1.200-1-2.800-1.200-4-3.200-1.200-1.800-.6-2.200-2.200-3 3.200.4 6.200-1 7.800-2.800z" fill="#d89238" stroke="#8a5a20" stroke-width=".6"/>
<path d="M927 80l3-2M929 82.500l3.500-3M931.500 83.500l2.500-3" stroke="#8a5a20" stroke-width=".6"/>
<!-- wand -->
<path d="M953 84.200l1-3 8.200-8 2 2-8.200 8z" fill="#f4c840" stroke="#8a6a20" stroke-width=".7"/>
<path d="M961.200 74.200l1.200-1.200a1.400 1.400 0 0 1 2 2l-1.200 1.200z" fill="#e03030"/>
<path d="M953 84.200l.6-1.800 1.200 1.200z" fill="#333"/>
<path d="M955.500 68.800l.8 1.800 1.900.2-1.400 1.300.4 1.900-1.700-1-1.700 1 .4-1.900-1.400-1.300 1.900-.2z" fill="#e83030"/>
<path d="M951 75l.8 1.800 1.900.2-1.400 1.300.4 1.900-1.700-1-1.700 1 .4-1.900-1.400-1.300 1.900-.2z" fill="#e83030"/>
<path d="M961 69l.5 1.100 1.200.1-.9.800.3 1.200-1.100-.6-1.100.6.300-1.200-.9-.8 1.200-.1z" fill="#f0a020"/>
<circle cx="955.500" cy="71.300" r=".8" fill="#f8e040"/><circle cx="951" cy="77.500" r=".8" fill="#f8e040"/>
<use href="#dd" x="968.500" y="76"/>
<!-- box arrows -->
<rect x="982.500" y="69.500" width="15" height="15" fill="#f6f6f6" stroke="#3a3a3a" stroke-width="1.100"/>
<path d="M985.500 77h9M988 74.500l-2.600 2.500 2.600 2.500M992 74.500l2.600 2.500-2.600 2.500" stroke="#777" stroke-width="1.100" fill="none"/>
<use href="#dd" x="1002.500" y="76"/>
<!-- row 3 -->
<text x="555.5" y="114" font-size="6.800" font-weight="bold" fill="#2464b4" textLength="17.800" lengthAdjust="spacingAndGlyphs">HTML</text>
<!-- web page -->
<rect x="584.500" y="105.500" width="10" height="12" rx=".8" fill="url(#gDoc)" stroke="#a89894" stroke-width="1"/>
<circle cx="593.500" cy="112.500" r="3.600" fill="#2a6ed0"/>
<path d="M591.500 110.500c1-.8 2.400-1 3.200-.2.400.8-.6 1.400-.4 2.200.4.800 1.400 1 1.200 2-1 .8-2.200.6-3-.2-.2-1 .6-1.400.2-2.200-.4-.6-1.200-.8-1.200-1.600z" fill="#4cb840"/>
<use href="#dd" x="602" y="111"/>
<text x="616.600" y="117.600" font-size="16.500" font-weight="bold" fill="#3a8ae0" textLength="12.400" lengthAdjust="spacingAndGlyphs">Ω</text>
<use href="#dd" x="635.800" y="111"/>
<!-- smiley -->
<circle cx="657" cy="112" r="6.800" fill="#fada6a" stroke="#e8a030" stroke-width="1.100"/>
<circle cx="654.400" cy="110.200" r="1.300" fill="#9a5a20"/><circle cx="659.600" cy="110.200" r="1.300" fill="#9a5a20"/>
<path d="M653.600 113.600h6.800a3.400 3 0 0 1-6.800 0z" fill="#fff" stroke="#c87828" stroke-width=".6"/><circle cx="651.800" cy="112.800" r=".9" fill="#f09060"/><circle cx="662.200" cy="112.800" r=".9" fill="#f09060"/>
<!-- link -->
<rect x="674.500" y="108.500" width="9" height="6" rx="3" fill="#f4f4f4" stroke="#8a8a8a" stroke-width="1.200"/>
<rect x="681" y="108.500" width="9" height="6" rx="3" fill="none" stroke="#8a8a8a" stroke-width="1.200"/>
<path d="M679 111.500h6.500" stroke="#555" stroke-width="1.400"/>
<!-- sup / sub -->
<path d="M700.500 107.500l8 8.500M708.500 107.500l-8 8.500" stroke="#333" stroke-width="1.700"/>
<text x="710" y="110.200" font-size="7.500" font-weight="bold" fill="#2a78d8">2</text>
<path d="M724.500 107.500l8 8.500M732.500 107.500l-8 8.500" stroke="#333" stroke-width="1.700"/>
<text x="733.800" y="117.200" font-size="7.500" font-weight="bold" fill="#2a78d8">2</text>
<!-- ol -->
<text x="746.800" y="109.300" font-size="5.500" font-weight="bold" fill="#2a78d8">1</text>
<text x="746.800" y="114.300" font-size="5.500" font-weight="bold" fill="#2a78d8">2</text>
<text x="746.800" y="119.300" font-size="5.500" font-weight="bold" fill="#2a78d8">3</text>
<path d="M752 107.500h9M752 112.500h9M752 117.500h9" stroke="#2a2a2a" stroke-width="1"/>
<use href="#dd" x="766.800" y="111"/>
<!-- ul -->
<circle cx="782.500" cy="107.500" r="1.200" fill="#fff" stroke="#2a78d8" stroke-width="1"/>
<circle cx="782.500" cy="112.500" r="1.200" fill="#fff" stroke="#2a78d8" stroke-width="1"/>
<circle cx="782.500" cy="117.500" r="1.200" fill="#fff" stroke="#2a78d8" stroke-width="1"/>
<path d="M786 107.500h9M786 112.500h9M786 117.500h9" stroke="#2a2a2a" stroke-width="1"/>
<use href="#dd" x="800.600" y="111"/>
<rect x="813" y="103" width="1" height="18" fill="#b8bfd6"/>
<!-- undo -->
<path d="M824.800 106.600l.4 6.400 6-.6-2.200-1.800c2.200-1.400 4.600-.4 4.800 2 .2 2-.8 4-2.600 6.200 3.400-1.800 5.800-4.600 5.600-7.600-.4-3.800-5.200-6.200-9.800-2.800z" fill="#3a88dc"/>
<!-- redo -->
<path d="M861.200 106.600l-.4 6.400-6-.6 2.200-1.800c-2.200-1.400-4.600-.4-4.800 2-.2 2 .8 4 2.600 6.200-3.400-1.800-5.800-4.600-5.600-7.600.4-3.800 5.200-6.200 9.800-2.800z" fill="#b4d6f2"/>
<!-- active ltr -->
<path d="M867.500 124v-21a2 2 0 0 1 2-2h17a2 2 0 0 1 2 2v21z" fill="#fde3a8" stroke="#e3b56c"/>
<path d="M872.200 107.200l4.800 4.100-4.800 4.100z" fill="#2a78e0"/>
<text x="878.200" y="115" font-size="11.500" font-weight="bold" fill="#111" textLength="7.800" lengthAdjust="spacingAndGlyphs">¶</text>
<!-- rtl -->
<text x="896" y="115" font-size="11.500" font-weight="bold" fill="#222" textLength="7.800" lengthAdjust="spacingAndGlyphs">¶</text>
<path d="M910.200 107.200l-4.800 4.100 4.800 4.100z" fill="#2a78e0"/>
<!-- binoculars -->
<path d="M920.800 105.500h4.400v1.500h-.6v2.500h3.800v-2.500h-.6v-1.500h4.400v1.500h-.6v2.500l1.400 1v5l-1 1v1.500h.6v1.500h-5.400v-1.500h.6v-1.500l-.8-1v-1.500h-1.200v1.500l-.8 1v1.500h.6v1.500h-5.400v-1.500h.6v-1.500l-1-1v-5l1.400-1v-2.500h-.6z" fill="#333"/>
<path d="M922 112h3M929 112h3" stroke="#777" stroke-width="1"/>
<!-- help -->
<circle cx="951" cy="112" r="7" fill="#3a84e0"/>
<text x="948" y="116.200" font-size="11.500" font-weight="bold" fill="#e8f2ff">?</text>
</svg>

<div class="rb red" style="top:369px">微信复制</div>
<div class="rb" style="top:403px">外网复制</div>
<div class="rb red" style="top:437px">保存文章</div>
<div class="rb" style="top:471px">导入文章</div>
<div class="rb" style="top:505px">清空/新建</div>
<div class="rb" style="top:539px">手机预览</div>
<div class="rb" style="top:573px">云端草稿</div>
<div class="rb" style="top:607px">更多功能</div>
</body>
</html>
